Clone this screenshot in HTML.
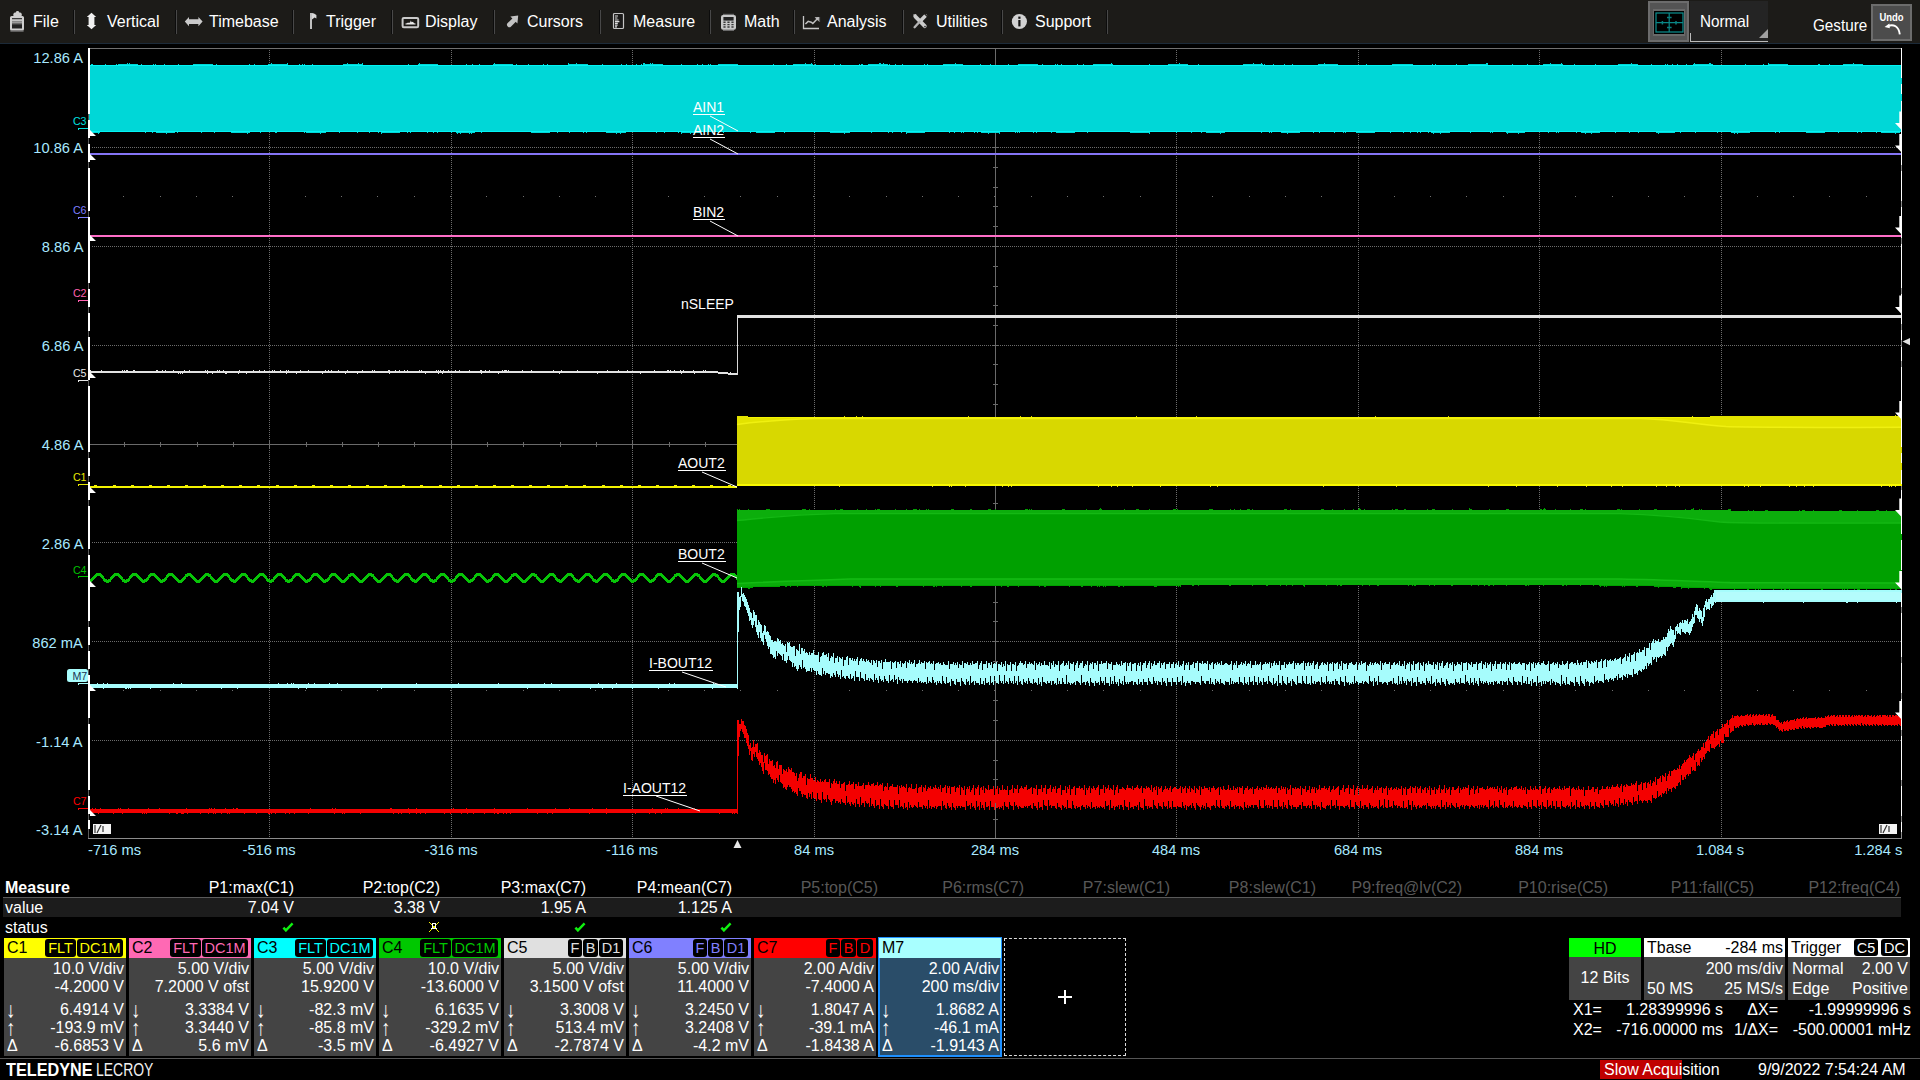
<!DOCTYPE html>
<html lang="en"><head><meta charset="utf-8"><title>Teledyne LeCroy</title>
<style>
html,body{margin:0;padding:0;background:#000;}
body{width:1920px;height:1080px;overflow:hidden;font-family:"Liberation Sans",sans-serif;color:#fff;}
#scr{position:relative;width:1920px;height:1080px;background:#000;overflow:hidden;}
.abs{position:absolute;white-space:nowrap;}
/* ---------- menu bar ---------- */
#menu{position:absolute;left:0;top:0;width:1920px;height:43px;background:#1c1b18;}
#menuline{position:absolute;left:0;top:43px;width:1920px;height:1px;background:#1c2a38;}
#menu .mi{position:absolute;top:12px;height:20px;line-height:20px;font-size:16px;color:#fff;white-space:nowrap;}
#menu .sep{position:absolute;top:10px;width:1px;height:24px;background:#484848;border-left:1px solid #0c0c0c;margin-left:-1px;}
#menu svg.ic{position:absolute;overflow:visible;}
#gridbtn{position:absolute;left:1648px;top:1px;width:41px;height:41px;background:#545454;border:2px solid #6c6c6c;box-sizing:border-box;}
#gridbtn i{position:absolute;left:2.8px;top:6px;width:32.6px;height:26.6px;background:#000;border:solid #696969;border-width:2px 1.4px;box-sizing:border-box;}
#normbox{position:absolute;left:1690px;top:1px;width:78px;height:41px;background:#242424;box-sizing:border-box;border-left:1px solid #bbb;border-bottom:1px solid #bbb;}
#normbox:before{content:"";position:absolute;left:-1px;top:0;width:1px;height:32px;background:#242424;}
#normbox span{position:absolute;left:9px;top:10px;font-size:16.5px;line-height:20px;transform:scaleX(0.925);transform-origin:0 50%;}
#normbox b{position:absolute;right:0;bottom:3px;width:0;height:0;border-left:9px solid transparent;border-bottom:9px solid #a0a0a0;}
#gesture{left:1813px;top:15px;font-size:16.5px;line-height:20px;transform:scaleX(0.925);transform-origin:0 50%;}
#undo{position:absolute;left:1871px;top:4px;width:41px;height:37px;background:#4c4c4c;border:2px solid #6c6c6c;box-sizing:border-box;}
#undo span{position:absolute;left:0;width:37px;top:5px;text-align:center;font-size:10.5px;font-weight:bold;line-height:12px;transform:scaleX(0.9);}
/* ---------- plot text ---------- */
.yl{position:absolute;right:1837px;font-size:15.33px;line-height:16px;color:#a8e8ff;white-space:nowrap;transform:scaleX(0.957);transform-origin:100% 50%;}
.xl{position:absolute;top:842px;font-size:15.33px;line-height:16px;color:#a8e8ff;white-space:nowrap;transform:scaleX(0.957);transform-origin:50% 50%;}
.ch{position:absolute;font-size:10.67px;line-height:10px;white-space:nowrap;letter-spacing:-0.2px;}
.tl{position:absolute;font-size:14px;line-height:14px;color:#fff;white-space:nowrap;border-bottom:1px solid #fff;padding:0 1px 0 0;}
.tl.nu{border-bottom:none;}
/* ---------- measure table ---------- */
#mhead{position:absolute;left:3px;top:897px;width:1898px;height:1px;background:#5a5a5a;}
#mval{position:absolute;left:3px;top:898px;width:1898px;height:19px;background:#1c1c1c;}
.mt{position:absolute;font-size:16px;line-height:18px;white-space:nowrap;color:#fff;}
.mt.r{text-align:right;width:160px;}
.mt.dim{color:#585858;}
/* ---------- channel panels ---------- */
.pn{position:absolute;top:938px;width:122px;height:118px;background:#444;}
.pn .hd{position:absolute;left:0;top:0;width:122px;height:20px;}
.pn .nm{position:absolute;left:3px;top:0;font-size:16px;line-height:20px;color:#000;}
.pn .bg{position:absolute;top:1px;height:18px;background:#000;border-radius:3px;font-size:14.5px;line-height:18px;text-align:center;}
.pn .rw{position:absolute;right:2px;font-size:16px;line-height:18px;color:#fff;white-space:nowrap;text-align:right;}
.pn .sy{position:absolute;left:3px;font-size:16px;line-height:18px;color:#fff;}
.pn .sy.ar{font-size:19px;left:2px;transform:scaleY(1.15);}
.pn.sel{background:#2a4d69;outline:2px solid #1e90ff;outline-offset:-1px;}
#addbox{position:absolute;left:1004px;top:938px;width:122px;height:118px;border:1px dashed #ddd;box-sizing:border-box;}
/* ---------- right info boxes ---------- */
.ib{position:absolute;top:938px;height:62px;background:#444;}
.ib .hd{position:absolute;left:0;top:0;right:0;height:19px;background:#fff;color:#000;}
.ib .t{position:absolute;font-size:16px;line-height:18px;white-space:nowrap;}
.cx{position:absolute;font-size:16px;line-height:18px;white-space:nowrap;color:#fff;}
/* ---------- status bar ---------- */
#sline{position:absolute;left:0;top:1058px;width:1920px;height:1px;background:#555;}
#logo,#logo2{position:absolute;top:1059px;font-size:18.5px;line-height:22px;color:#fff;white-space:nowrap;transform-origin:0 0;}
#logo{left:6px;font-weight:bold;transform:scaleX(0.877);}
#logo2{left:96px;transform:scaleX(0.754);color:#f0f0f0;}
#slow{position:absolute;left:1600px;top:1060px;width:124px;height:19px;}
#slow i{position:absolute;left:0;top:0;width:82px;height:19px;background:#c00000;}
#slow span{position:absolute;left:4px;top:0;font-size:16px;line-height:19px;color:#fff;white-space:nowrap;}
#date{left:1758px;top:1060px;font-size:16px;line-height:19px;color:#fff;}

</style></head>
<body>
<div id="scr">
<div id="menu">
<svg class="ic" style="left:9px;top:10px" width="16" height="22" viewBox="0 0 16 22"><rect x="2" y="7" width="12" height="12.6" rx="0.6" fill="#222" stroke="#cfcfcf" stroke-width="2"/><rect x="4.4" y="2.6" width="8.3" height="4.6" rx="1.6" fill="#cfcfcf"/><rect x="6.9" y="1" width="3.2" height="3" rx="1.4" fill="#cfcfcf"/><rect x="3" y="8" width="10" height="1.2" fill="#3a3a3a"/><rect x="3" y="9.2" width="10" height="2" fill="#c4c4c4"/><rect x="3" y="11.2" width="10" height="1.8" fill="#9a9a9a"/><rect x="3" y="13" width="10" height="1.4" fill="#6a6a6a"/><rect x="1.4" y="20.4" width="13.2" height="1.2" fill="#8a8a8a"/></svg>
<div class="mi" style="left:33px">File</div>
<svg class="ic" style="left:86px;top:12px" width="12" height="18" viewBox="0 0 12 18"><path d="M5.5 0.8 L10.2 5 L8.4 5 L8.4 13 L10.2 13 L5.5 17.2 L0.8 13 L2.6 13 L2.6 5 L0.8 5 Z" fill="#f0f0f0"/></svg>
<div class="mi" style="left:107px">Vertical</div>
<svg class="ic" style="left:184px;top:16px" width="20" height="12" viewBox="0 0 20 12"><path d="M0.8 5.6 L5 0.9 L5 3.2 L14.4 3.2 L14.4 0.9 L18.6 5.6 L14.4 10.3 L14.4 8 L5 8 L5 10.3 Z" fill="#cacaca"/></svg>
<div class="mi" style="left:209px">Timebase</div>
<svg class="ic" style="left:308px;top:12px" width="10" height="18" viewBox="0 0 10 18"><rect x="2" y="1" width="2" height="16" fill="#c0c0c0"/><path d="M4 1 L6 1.4 L8.4 3 L8.4 6.4 L6.6 5.6 L4 7.4 Z" fill="#d8d8d8"/></svg>
<div class="mi" style="left:326px">Trigger</div>
<svg class="ic" style="left:401px;top:16px" width="19" height="13" viewBox="0 0 19 13"><rect x="1.6" y="1.9" width="15.6" height="9.4" rx="1.2" fill="#1c1b18" stroke="#cacaca" stroke-width="2"/><path d="M4.5 8.6 L4.5 7.4 L6 7.2 L7 6.4 L8 7 L9.2 6.2 L9.8 4.4 L10.6 6.2 L12 5.8 L13 7.2 L14.5 7.4 L14.5 8.6 Z" fill="#ececec"/></svg>
<div class="mi" style="left:425px">Display</div>
<svg class="ic" style="left:506px;top:15px" width="13" height="13" viewBox="0 0 13 13"><path d="M3.4 9.8 L8.6 4.6" stroke="#c2c2c2" stroke-width="4.8" stroke-linecap="round"/><path d="M4.4 1.4 L12.2 0.6 L11.4 8.6 Z" fill="#c2c2c2"/></svg>
<div class="mi" style="left:527px">Cursors</div>
<svg class="ic" style="left:612px;top:12px" width="13" height="18" viewBox="0 0 13 18"><rect x="1.5" y="1.5" width="10" height="15" rx="1" fill="#1b1a19" stroke="#c4c4c4" stroke-width="1.2"/><path d="M3 4 H6 M3 6 H5.4 M3 8 H6.6 M3 9.6 H7.4 M3 11.4 H5.8 M3 13.2 H5.6 M3 14.8 H5" stroke="#dcdcdc" stroke-width="1.2"/></svg>
<div class="mi" style="left:633px">Measure</div>
<svg class="ic" style="left:720px;top:13px" width="17" height="19" viewBox="0 0 17 19"><rect x="3" y="0.8" width="11" height="1.4" fill="#6a6a6a"/><rect x="3" y="16.6" width="11" height="1.4" fill="#6a6a6a"/><rect x="1" y="2" width="15" height="14.8" rx="2" fill="#c8c8c8"/><rect x="3.4" y="4" width="10.2" height="3.6" fill="#222"/><path d="M3.4 9.2 H13.6 M3.4 11.6 H13.6 M3.4 14 H13.6" stroke="#3a3a3a" stroke-width="1.4" stroke-dasharray="2.2 1.8"/></svg>
<div class="mi" style="left:744px">Math</div>
<svg class="ic" style="left:802px;top:15px" width="19" height="16" viewBox="0 0 19 16"><path d="M1.5 1 V13.5 H17" fill="none" stroke="#c8c8c8" stroke-width="1.3"/><path d="M3.4 9 L6.2 6.4 L9.2 7.2 L10.8 8.4 L15.6 3.4" fill="none" stroke="#c0c0c0" stroke-width="1.5"/><path d="M12.6 2.2 L17 2 L16.8 6.4 Z" fill="#c0c0c0"/><path d="M17.6 2 V7" stroke="#777" stroke-width="0.8"/></svg>
<div class="mi" style="left:827px">Analysis</div>
<svg class="ic" style="left:912px;top:13px" width="17" height="17" viewBox="0 0 17 17"><path d="M3.4 3.6 L12.8 13.2" stroke="#cccccc" stroke-width="3.8" stroke-linecap="round"/><path d="M13.4 2.8 L8.8 7.4" stroke="#cccccc" stroke-width="3.6" stroke-linecap="round"/><path d="M7.6 8.8 L2.6 14.2" stroke="#b4b4b4" stroke-width="2.4" stroke-linecap="round"/><path d="M1.2 1.6 L4.6 1 L2 4.6 Z" fill="#cccccc"/><circle cx="13" cy="13.6" r="0.9" fill="#3a3a3a"/><path d="M12.6 0.8 L15.4 3.6" stroke="#1c1b18" stroke-width="1.2"/></svg>
<div class="mi" style="left:936px">Utilities</div>
<svg class="ic" style="left:1011px;top:13px" width="17" height="17" viewBox="0 0 17 17"><circle cx="8.4" cy="8.5" r="7.6" fill="#d2d2d2"/><rect x="7.3" y="3.6" width="2.2" height="2.2" fill="#111"/><rect x="7.3" y="7" width="2.2" height="6.4" fill="#111"/></svg>
<div class="mi" style="left:1035px">Support</div>
<div class="sep" style="left:74px"></div><div class="sep" style="left:176px"></div><div class="sep" style="left:293px"></div><div class="sep" style="left:392px"></div><div class="sep" style="left:494px"></div><div class="sep" style="left:600px"></div><div class="sep" style="left:710px"></div><div class="sep" style="left:794px"></div><div class="sep" style="left:903px"></div><div class="sep" style="left:1002px"></div><div class="sep" style="left:1107px"></div>
<div id="gridbtn"><i></i><svg style="position:absolute;left:4px;top:8px" width="31" height="23" viewBox="0 0 31 23"><rect x="2" y="2" width="27" height="19" fill="none" stroke="#0a9090" stroke-width="1.2"/><path d="M15.2 2 V21 M2 11.6 H29" stroke="#0a8888" stroke-width="1.2"/><path d="M13 6.6 H17.6 M13 16.4 H17.6 M8.4 10 V13.4 M22 10 V13.4" stroke="#0a8080" stroke-width="1.5"/></svg></div>
<div id="normbox"><span>Normal</span><b></b></div>
<div id="gesture" class="abs">Gesture</div>
<div id="undo"><span>Undo</span><svg style="position:absolute;left:10px;top:14px" width="20" height="16" viewBox="0 0 20 16"><path d="M5 6 C10.4 3.8 15.8 6.2 16.8 14.4" fill="none" stroke="#fff" stroke-width="1.9"/><path d="M1.6 7 L6.4 3.4 L6.8 8.2 Z" fill="#fff"/></svg></div>
</div>
<div id="menuline"></div>
<svg id="plot" class="abs" style="left:0;top:0" width="1920" height="1080" viewBox="0 0 1920 1080" shape-rendering="crispEdges">
<path d="M269.5 50 V838" stroke="#6c6c6c" stroke-width="1" stroke-dasharray="1 1"/>
<path d="M451.5 50 V838" stroke="#6c6c6c" stroke-width="1" stroke-dasharray="1 1"/>
<path d="M632.5 50 V838" stroke="#6c6c6c" stroke-width="1" stroke-dasharray="1 1"/>
<path d="M814.5 50 V838" stroke="#6c6c6c" stroke-width="1" stroke-dasharray="1 1"/>
<path d="M1176.5 50 V838" stroke="#6c6c6c" stroke-width="1" stroke-dasharray="1 1"/>
<path d="M1358.5 50 V838" stroke="#6c6c6c" stroke-width="1" stroke-dasharray="1 1"/>
<path d="M1539.5 50 V838" stroke="#6c6c6c" stroke-width="1" stroke-dasharray="1 1"/>
<path d="M1721.5 50 V838" stroke="#6c6c6c" stroke-width="1" stroke-dasharray="1 1"/>
<path d="M92 147.5 H1901" stroke="#6c6c6c" stroke-width="1" stroke-dasharray="1 1"/>
<path d="M92 246.5 H1901" stroke="#6c6c6c" stroke-width="1" stroke-dasharray="1 1"/>
<path d="M92 345.5 H1901" stroke="#6c6c6c" stroke-width="1" stroke-dasharray="1 1"/>
<path d="M92 542.5 H1901" stroke="#6c6c6c" stroke-width="1" stroke-dasharray="1 1"/>
<path d="M92 641.5 H1901" stroke="#6c6c6c" stroke-width="1" stroke-dasharray="1 1"/>
<path d="M92 740.5 H1901" stroke="#6c6c6c" stroke-width="1" stroke-dasharray="1 1"/>
<path d="M995.5 48 V838 M90 444.5 H1901" stroke="#6a6a6a" stroke-width="1"/>
<path d="M124.5 442 V447M160.5 442 V447M197.5 442 V447M233.5 442 V447M269.5 441 V448M306.5 442 V447M342.5 442 V447M378.5 442 V447M414.5 442 V447M451.5 441 V448M487.5 442 V447M523.5 442 V447M560.5 442 V447M596.5 442 V447M632.5 441 V448M669.5 442 V447M705.5 442 V447M741.5 442 V447M777.5 442 V447M814.5 441 V448M850.5 442 V447M886.5 442 V447M923.5 442 V447M959.5 442 V447M995.5 441 V448M1032.5 442 V447M1068.5 442 V447M1104.5 442 V447M1140.5 442 V447M1177.5 441 V448M1213.5 442 V447M1249.5 442 V447M1286.5 442 V447M1322.5 442 V447M1358.5 441 V448M1395.5 442 V447M1431.5 442 V447M1467.5 442 V447M1503.5 442 V447M1540.5 441 V448M1576.5 442 V447M1612.5 442 V447M1649.5 442 V447M1685.5 442 V447M1721.5 441 V448M1758.5 442 V447M1794.5 442 V447M1830.5 442 V447M1866.5 442 V447M993 68.5 H998M993 88.5 H998M993 108.5 H998M993 128.5 H998M992 147.5 H999M993 167.5 H998M993 187.5 H998M993 206.5 H998M993 226.5 H998M992 246.5 H999M993 266.5 H998M993 286.5 H998M993 305.5 H998M993 325.5 H998M992 345.5 H999M993 364.5 H998M993 384.5 H998M993 404.5 H998M993 424.5 H998M992 444.5 H999M993 463.5 H998M993 483.5 H998M993 503.5 H998M993 522.5 H998M992 542.5 H999M993 562.5 H998M993 582.5 H998M993 602.5 H998M993 621.5 H998M992 641.5 H999M993 661.5 H998M993 680.5 H998M993 700.5 H998M993 720.5 H998M992 740.5 H999M993 760.5 H998M993 779.5 H998M993 799.5 H998M993 819.5 H998" stroke="#6a6a6a" stroke-width="1"/>
<path d="M123 196.5h1M160 196.5h1M196 196.5h1M232 196.5h1M269 196.5h1M305 196.5h1M341 196.5h1M377 196.5h1M414 196.5h1M450 196.5h1M486 196.5h1M523 196.5h1M559 196.5h1M595 196.5h1M632 196.5h1M668 196.5h1M704 196.5h1M740 196.5h1M777 196.5h1M813 196.5h1M849 196.5h1M886 196.5h1M922 196.5h1M958 196.5h1M994 196.5h1M1031 196.5h1M1067 196.5h1M1103 196.5h1M1140 196.5h1M1176 196.5h1M1212 196.5h1M1249 196.5h1M1285 196.5h1M1321 196.5h1M1358 196.5h1M1394 196.5h1M1430 196.5h1M1466 196.5h1M1503 196.5h1M1539 196.5h1M1575 196.5h1M1612 196.5h1M1648 196.5h1M1684 196.5h1M1720 196.5h1M1757 196.5h1M1793 196.5h1M1829 196.5h1M1866 196.5h1M123 690.5h1M160 690.5h1M196 690.5h1M232 690.5h1M269 690.5h1M305 690.5h1M341 690.5h1M377 690.5h1M414 690.5h1M450 690.5h1M486 690.5h1M523 690.5h1M559 690.5h1M595 690.5h1M632 690.5h1M668 690.5h1M704 690.5h1M740 690.5h1M777 690.5h1M813 690.5h1M849 690.5h1M886 690.5h1M922 690.5h1M958 690.5h1M994 690.5h1M1031 690.5h1M1067 690.5h1M1103 690.5h1M1140 690.5h1M1176 690.5h1M1212 690.5h1M1249 690.5h1M1285 690.5h1M1321 690.5h1M1358 690.5h1M1394 690.5h1M1430 690.5h1M1466 690.5h1M1503 690.5h1M1539 690.5h1M1575 690.5h1M1612 690.5h1M1648 690.5h1M1684 690.5h1M1720 690.5h1M1757 690.5h1M1793 690.5h1M1829 690.5h1M1866 690.5h1" stroke="#707070" stroke-width="1"/>
<path d="M90 48.5 H1901" stroke="#707070" stroke-width="1"/>
<path d="M88 838.5 H1902 M1901.5 48 V838" stroke="#8c8c8c" stroke-width="1"/>
<path d="M88 65L91 65L91 64L93 64L93 65L105 65L105 64L106 64L106 65L116 65L116 64L117 64L117 65L118 65L118 64L127 64L127 63L128 63L128 64L129 64L129 63L130 63L130 64L138 64L138 65L141 65L141 64L142 64L142 65L153 65L153 64L154 64L154 65L155 65L155 64L156 64L156 65L164 65L164 64L165 64L165 65L178 65L178 64L179 64L179 65L193 65L193 64L213 64L213 65L216 65L216 64L217 64L217 65L249 65L249 64L250 64L250 65L254 65L254 64L255 64L255 65L268 65L268 64L271 64L271 63L272 63L272 64L287 64L287 63L288 63L288 65L299 65L299 64L300 64L300 65L302 65L302 64L303 64L303 65L304 65L304 64L305 64L305 65L312 65L312 64L313 64L313 65L343 65L343 64L347 64L347 63L348 63L348 64L358 64L358 63L359 63L359 64L362 64L362 63L363 63L363 65L408 65L408 64L409 64L409 65L418 65L418 64L419 64L419 63L420 63L420 64L438 64L438 65L466 65L466 64L467 64L467 65L472 65L472 64L473 64L473 65L479 65L479 64L480 64L480 65L493 65L493 64L494 64L494 63L495 63L495 64L513 64L513 65L516 65L516 64L517 64L517 65L528 65L528 64L529 64L529 65L543 65L543 64L544 64L544 65L547 65L547 64L548 64L548 65L568 65L568 63L569 63L569 64L576 64L576 63L577 63L577 64L588 64L588 65L602 65L602 64L603 64L603 65L621 65L621 64L622 64L622 65L626 65L626 64L627 64L627 65L636 65L636 64L637 64L637 65L641 65L641 64L642 64L642 65L643 65L643 63L645 63L645 64L650 64L650 63L651 63L651 64L652 64L652 63L653 63L653 64L663 64L663 65L681 65L681 64L682 64L682 65L697 65L697 64L698 64L698 65L702 65L702 64L703 64L703 65L708 65L708 64L709 64L709 65L710 65L710 64L711 64L711 65L718 65L718 64L738 64L738 65L773 65L773 64L774 64L774 65L786 65L786 64L787 64L787 65L793 65L793 64L805 64L805 63L806 63L806 64L811 64L811 63L812 63L812 64L813 64L813 65L815 65L815 64L816 64L816 65L834 65L834 64L835 64L835 65L840 65L840 64L841 64L841 65L859 65L859 64L860 64L860 65L861 65L861 64L863 64L863 65L868 65L868 64L879 64L879 63L881 63L881 64L883 64L883 63L884 63L884 64L888 64L888 65L889 65L889 64L890 64L890 65L895 65L895 64L896 64L896 65L902 65L902 64L903 64L903 65L924 65L924 64L925 64L925 65L927 65L927 64L928 64L928 65L943 65L943 64L955 64L955 63L956 63L956 64L963 64L963 65L980 65L980 64L981 64L981 65L990 65L990 64L991 64L991 65L1008 65L1008 64L1009 64L1009 65L1018 65L1018 64L1038 64L1038 65L1042 65L1042 64L1043 64L1043 65L1055 65L1055 64L1056 64L1056 65L1057 65L1057 64L1058 64L1058 65L1061 65L1061 64L1062 64L1062 65L1077 65L1077 64L1078 64L1078 65L1083 65L1083 64L1084 64L1084 65L1093 65L1093 64L1111 64L1111 63L1112 63L1112 64L1113 64L1113 65L1149 65L1149 64L1150 64L1150 65L1168 65L1168 64L1179 64L1179 63L1180 63L1180 64L1188 64L1188 65L1198 65L1198 64L1199 64L1199 65L1243 65L1243 64L1253 64L1253 63L1254 63L1254 64L1261 64L1261 63L1262 63L1262 64L1263 64L1263 65L1264 65L1264 64L1265 64L1265 65L1273 65L1273 64L1274 64L1274 65L1284 65L1284 64L1285 64L1285 65L1292 65L1292 64L1293 64L1293 65L1318 65L1318 64L1324 64L1324 63L1325 63L1325 64L1338 64L1338 65L1366 65L1366 64L1367 64L1367 65L1392 65L1392 64L1413 64L1413 65L1432 65L1432 64L1433 64L1433 65L1435 65L1435 64L1436 64L1436 65L1456 65L1456 64L1457 64L1457 65L1468 65L1468 64L1486 64L1486 63L1488 63L1488 65L1512 65L1512 64L1513 64L1513 65L1527 65L1527 64L1528 64L1528 65L1543 65L1543 64L1550 64L1550 63L1551 63L1551 64L1561 64L1561 63L1562 63L1562 64L1563 64L1563 65L1574 65L1574 64L1575 64L1575 65L1595 65L1595 64L1596 64L1596 65L1618 65L1618 64L1631 64L1631 63L1632 63L1632 64L1638 64L1638 65L1651 65L1651 64L1652 64L1652 65L1665 65L1665 64L1666 64L1666 65L1667 65L1667 64L1668 64L1668 65L1672 65L1672 64L1673 64L1673 65L1677 65L1677 64L1678 64L1678 65L1686 65L1686 64L1687 64L1687 65L1693 65L1693 64L1694 64L1694 63L1695 63L1695 64L1709 64L1709 63L1711 63L1711 64L1713 64L1713 65L1745 65L1745 64L1746 64L1746 65L1763 65L1763 64L1764 64L1764 65L1768 65L1768 63L1769 63L1769 64L1788 64L1788 65L1818 65L1818 64L1820 64L1820 65L1829 65L1829 64L1830 64L1830 65L1843 65L1843 64L1853 64L1853 63L1854 63L1854 64L1863 64L1863 65L1902 65L1902 132L1900 132L1900 133L1896 133L1896 134L1895 134L1895 133L1881 133L1881 132L1877 132L1877 133L1876 133L1876 132L1862 132L1862 133L1861 133L1861 132L1858 132L1858 133L1857 133L1857 132L1839 132L1839 133L1838 133L1838 132L1825 132L1825 133L1806 133L1806 132L1780 132L1780 133L1779 133L1779 132L1776 132L1776 133L1775 133L1775 132L1750 132L1750 133L1738 133L1738 134L1737 134L1737 133L1735 133L1735 134L1734 134L1734 133L1731 133L1731 132L1718 132L1718 133L1717 133L1717 132L1696 132L1696 133L1695 133L1695 132L1681 132L1681 133L1680 133L1680 132L1675 132L1675 133L1659 133L1659 134L1658 134L1658 133L1656 133L1656 132L1639 132L1639 133L1638 133L1638 132L1630 132L1630 133L1629 133L1629 132L1616 132L1616 133L1615 133L1615 132L1600 132L1600 133L1592 133L1592 134L1591 134L1591 133L1586 133L1586 134L1585 134L1585 133L1581 133L1581 132L1577 132L1577 133L1576 133L1576 132L1559 132L1559 133L1558 133L1558 132L1557 132L1557 133L1556 133L1556 132L1549 132L1549 133L1548 133L1548 132L1525 132L1525 133L1519 133L1519 134L1518 134L1518 133L1508 133L1508 134L1507 134L1507 133L1506 133L1506 132L1493 132L1493 133L1492 133L1492 132L1491 132L1491 133L1490 133L1490 132L1471 132L1471 133L1470 133L1470 132L1450 132L1450 133L1441 133L1441 134L1440 134L1440 133L1434 133L1434 134L1433 134L1433 133L1431 133L1431 132L1429 132L1429 133L1428 133L1428 132L1421 132L1421 133L1420 133L1420 132L1418 132L1418 133L1417 133L1417 132L1411 132L1411 133L1410 133L1410 132L1404 132L1404 133L1403 133L1403 132L1391 132L1391 133L1390 133L1390 132L1375 132L1375 133L1356 133L1356 132L1346 132L1346 133L1345 133L1345 132L1344 132L1344 133L1343 133L1343 132L1335 132L1335 133L1334 133L1334 132L1320 132L1320 133L1319 133L1319 132L1314 132L1314 133L1313 133L1313 132L1300 132L1300 133L1288 133L1288 134L1287 134L1287 133L1281 133L1281 132L1272 132L1272 133L1271 133L1271 132L1270 132L1270 133L1269 133L1269 132L1262 132L1262 133L1261 133L1261 132L1225 132L1225 133L1221 133L1221 134L1220 134L1220 133L1206 133L1206 132L1202 132L1202 133L1201 133L1201 132L1192 132L1192 133L1191 133L1191 132L1177 132L1177 133L1176 133L1176 132L1150 132L1150 134L1149 134L1149 133L1130 133L1130 132L1088 132L1088 133L1087 133L1087 132L1075 132L1075 133L1056 133L1056 132L1052 132L1052 133L1051 133L1051 132L1037 132L1037 133L1036 133L1036 132L1034 132L1034 133L1033 133L1033 132L1020 132L1020 133L1019 133L1019 132L1018 132L1018 133L1017 133L1017 132L1016 132L1016 133L1015 133L1015 132L1000 132L1000 134L999 134L999 133L989 133L989 134L988 134L988 133L981 133L981 132L978 132L978 133L977 133L977 132L975 132L975 133L974 133L974 132L964 132L964 133L963 133L963 132L962 132L962 133L961 133L961 132L955 132L955 133L954 133L954 132L950 132L950 133L949 133L949 132L925 132L925 133L907 133L907 134L906 134L906 132L902 132L902 133L901 133L901 132L893 132L893 133L892 133L892 132L889 132L889 133L888 133L888 132L872 132L872 133L871 133L871 132L850 132L850 133L845 133L845 134L844 134L844 133L830 133L830 132L815 132L815 133L814 133L814 132L785 132L785 133L784 133L784 132L775 132L775 133L756 133L756 132L751 132L751 133L750 133L750 132L724 132L724 133L723 133L723 132L700 132L700 133L691 133L691 134L690 134L690 133L682 133L682 134L681 134L681 132L679 132L679 133L678 133L678 132L665 132L665 133L664 133L664 132L657 132L657 133L656 133L656 132L626 132L626 133L621 133L621 134L620 134L620 133L617 133L617 134L616 134L616 133L606 133L606 132L587 132L587 133L586 133L586 132L584 132L584 133L583 133L583 132L570 132L570 133L569 133L569 132L558 132L558 133L557 133L557 132L550 132L550 133L531 133L531 132L482 132L482 133L481 133L481 132L475 132L475 133L472 133L472 134L471 134L471 133L470 133L470 134L469 134L469 133L461 133L461 134L460 134L460 133L458 133L458 134L457 134L457 133L456 133L456 132L452 132L452 133L451 133L451 132L438 132L438 133L437 133L437 132L434 132L434 133L433 133L433 132L428 132L428 133L427 133L427 132L411 132L411 133L410 133L410 132L408 132L408 133L407 133L407 132L400 132L400 133L382 133L382 134L381 134L381 132L379 132L379 133L378 133L378 132L370 132L370 133L369 133L369 132L358 132L358 133L357 133L357 132L340 132L340 133L339 133L339 132L326 132L326 133L321 133L321 134L320 134L320 133L306 133L306 132L305 132L305 133L304 133L304 132L277 132L277 133L275 133L275 132L261 132L261 133L260 133L260 132L250 132L250 133L248 133L248 134L247 134L247 133L231 133L231 132L215 132L215 133L214 133L214 132L202 132L202 133L201 133L201 132L178 132L178 133L177 133L177 132L175 132L175 133L167 133L167 134L166 134L166 133L156 133L156 132L153 132L153 133L152 133L152 132L146 132L146 133L145 133L145 132L100 132L100 133L99 133L99 134L98 134L98 133L88 133Z" fill="#00d7d7"/>
<rect x="88" y="65" width="1814" height="1" fill="#00f4f4"/>
<rect x="88" y="131" width="1814" height="1" fill="#00f4f4"/>
<rect x="90" y="153" width="1811" height="2" fill="#8474f4"/>
<rect x="90" y="235" width="1811" height="2" fill="#ff6ec8"/>
<path d="M90 370L91 370L91 371L101 371L101 370L102 370L102 371L122 371L122 370L123 370L123 371L124 371L124 370L125 370L125 371L126 371L126 370L128 370L128 371L133 371L133 370L135 370L135 371L156 371L156 370L158 370L158 371L162 371L162 370L163 370L163 371L165 371L165 370L166 370L166 371L173 371L173 370L174 370L174 371L184 371L184 370L185 370L185 371L189 371L189 370L190 370L190 371L205 371L205 370L206 370L206 371L207 371L207 370L208 370L208 371L217 371L217 370L218 370L218 371L219 371L219 370L220 370L220 371L223 371L223 370L224 370L224 371L239 371L239 370L240 370L240 371L253 371L253 370L254 370L254 371L259 371L259 370L260 370L260 371L264 371L264 370L265 370L265 371L272 371L272 370L273 370L273 371L274 371L274 370L275 370L275 371L280 371L280 370L281 370L281 371L286 371L286 370L287 370L287 371L288 371L288 370L289 370L289 371L300 371L300 370L301 370L301 371L308 371L308 370L309 370L309 371L325 371L325 370L326 370L326 371L328 371L328 370L329 370L329 371L331 371L331 370L332 370L332 371L338 371L338 370L339 370L339 371L347 371L347 370L348 370L348 371L362 371L362 370L363 370L363 371L372 371L372 370L373 370L373 371L374 371L374 370L375 370L375 371L388 371L388 370L390 370L390 371L395 371L395 370L396 370L396 371L399 371L399 370L400 370L400 371L404 371L404 370L405 370L405 371L407 371L407 370L408 370L408 371L419 371L419 370L420 370L420 371L421 371L421 370L422 370L422 371L436 371L436 370L437 370L437 371L438 371L438 370L439 370L439 371L440 371L440 370L441 370L441 371L443 371L443 370L444 370L444 371L448 371L448 370L449 370L449 371L455 371L455 370L456 370L456 371L459 371L459 370L460 370L460 371L469 371L469 370L470 370L470 371L480 371L480 370L482 370L482 371L485 371L485 370L486 370L486 371L489 371L489 370L490 370L490 371L502 371L502 370L503 370L503 371L504 371L504 370L507 370L507 371L508 371L508 370L509 370L509 371L522 371L522 370L523 370L523 371L531 371L531 370L532 370L532 371L553 371L553 370L554 370L554 371L561 371L561 370L562 370L562 371L577 371L577 370L578 370L578 371L607 371L607 370L608 370L608 371L618 371L618 370L619 370L619 371L627 371L627 370L628 370L628 371L654 371L654 370L655 370L655 371L667 371L667 370L669 370L669 371L670 371L670 370L671 370L671 371L674 371L674 370L675 370L675 371L680 371L680 370L681 370L681 371L683 371L683 370L684 370L684 371L693 371L693 370L694 370L694 371L703 371L703 370L704 370L704 371L705 371L705 370L706 370L706 371L718 371L718 372L728 372L728 373L730 373L730 372L731 372L731 373L737 373L737 375L728 375L728 374L718 374L718 373L695 373L695 374L694 374L694 373L682 373L682 374L681 374L681 373L641 373L641 374L640 374L640 373L598 373L598 374L597 374L597 373L560 373L560 374L559 374L559 373L499 373L499 374L498 374L498 373L482 373L482 374L481 374L481 373L443 373L443 374L442 374L442 373L439 373L439 374L438 374L438 373L426 373L426 374L425 374L425 373L390 373L390 374L389 374L389 373L358 373L358 374L357 374L357 373L346 373L346 374L345 374L345 373L323 373L323 374L322 374L322 373L297 373L297 374L296 374L296 373L287 373L287 374L286 374L286 373L247 373L247 374L246 374L246 373L239 373L239 374L238 374L238 373L227 373L227 374L225 374L225 373L213 373L213 374L212 374L212 373L208 373L208 374L207 374L207 373L183 373L183 374L182 374L182 373L181 373L181 374L180 374L180 373L179 373L179 374L178 374L178 373L90 373Z" fill="#e2e2e2"/>
<rect x="737" y="315" width="1" height="60" fill="#d8d8d8"/>
<rect x="737" y="315" width="1164" height="3" fill="#e2e2e2"/>
<path d="M90 486L94 486L94 485L97 485L97 486L113 486L113 485L116 485L116 486L131 486L131 485L134 485L134 486L149 486L149 485L152 485L152 486L167 486L167 485L170 485L170 486L185 486L185 485L188 485L188 486L203 486L203 485L206 485L206 486L221 486L221 485L224 485L224 486L239 486L239 485L242 485L242 486L257 486L257 485L260 485L260 486L276 486L276 485L279 485L279 486L294 486L294 485L297 485L297 486L312 486L312 485L315 485L315 486L330 486L330 485L333 485L333 486L348 486L348 485L351 485L351 486L366 486L366 485L369 485L369 486L384 486L384 485L387 485L387 486L402 486L402 485L405 485L405 486L420 486L420 485L423 485L423 486L439 486L439 485L442 485L442 486L457 486L457 485L460 485L460 486L475 486L475 485L478 485L478 486L493 486L493 485L496 485L496 486L511 486L511 485L514 485L514 486L529 486L529 485L532 485L532 486L547 486L547 485L550 485L550 486L565 486L565 485L568 485L568 486L583 486L583 485L586 485L586 486L602 486L602 485L605 485L605 486L620 486L620 485L623 485L623 486L638 486L638 485L641 485L641 486L656 486L656 485L659 485L659 486L674 486L674 485L677 485L677 486L692 486L692 485L695 485L695 486L710 486L710 485L713 485L713 486L728 486L728 485L731 485L731 486L737 486L737 488L90 488Z" fill="#f2f200"/>
<path d="M737 416L748 416L748 417L844 417L844 416L845 416L845 417L856 417L856 416L857 416L857 417L862 417L862 416L863 416L863 417L968 417L968 416L969 416L969 417L1020 417L1020 416L1021 416L1021 417L1031 417L1031 416L1032 416L1032 417L1136 417L1136 416L1137 416L1137 417L1196 417L1196 416L1197 416L1197 417L1375 417L1375 416L1376 416L1376 417L1448 417L1448 416L1449 416L1449 417L1692 417L1692 416L1693 416L1693 417L1710 417L1710 416L1895 416L1895 415L1896 415L1896 416L1902 416L1902 486L1896 486L1896 487L1895 487L1895 486L1892 486L1892 487L1891 487L1891 486L1890 486L1890 487L1889 487L1889 486L1882 486L1882 487L1881 487L1881 486L1814 486L1814 487L1813 487L1813 486L1805 486L1805 487L1804 487L1804 486L1797 486L1797 487L1796 487L1796 486L1790 486L1790 487L1789 487L1789 486L1761 486L1761 487L1760 487L1760 486L1749 486L1749 487L1748 487L1748 486L1745 486L1745 487L1744 487L1744 486L1680 486L1680 487L1679 487L1679 486L1676 486L1676 487L1675 487L1675 486L1667 486L1667 487L1666 487L1666 486L1657 486L1657 487L1656 487L1656 486L1623 486L1623 487L1622 487L1622 486L1612 486L1612 487L1611 487L1611 486L1587 486L1587 487L1586 487L1586 486L1558 486L1558 487L1557 487L1557 486L1517 486L1517 487L1516 487L1516 486L1489 486L1489 487L1488 487L1488 486L1397 486L1397 487L1396 487L1396 486L1324 486L1324 487L1323 487L1323 486L1218 486L1218 487L1217 487L1217 486L1211 486L1211 487L1210 487L1210 486L1161 486L1161 487L1160 487L1160 486L1133 486L1133 487L1132 487L1132 486L1118 486L1118 487L1117 487L1117 486L1112 486L1112 487L1111 487L1111 486L1099 486L1099 487L1098 487L1098 486L1012 486L1012 487L1011 487L1011 486L1009 486L1009 487L1008 487L1008 486L1003 486L1003 487L1002 487L1002 486L966 486L966 487L965 487L965 486L952 486L952 487L951 487L951 486L950 486L950 487L949 487L949 486L933 486L933 487L932 487L932 486L840 486L840 487L839 487L839 486L737 486Z" fill="#d8d800"/>
<path d="M737 416 L737 424.5 C752 422.5 775 420 815 418.6 L1640 418.6 C1672 419.4 1694 424 1726 426.6 C1750 427.6 1800 427.6 1902 427.2 L1902 416 L1710 416 L1710 417 L748 417 L748 416 Z" fill="#e3e300" shape-rendering="auto"/>
<path d="M737 424.5 C752 422.5 775 420 815 418.6 L1640 418.6 C1672 419.4 1694 424 1726 426.6 C1750 427.6 1800 427.6 1902 427.2" fill="none" stroke="#f0f010" stroke-width="1.5" shape-rendering="auto"/>
<rect x="748" y="417" width="962" height="1" fill="#f4f400"/>
<rect x="737" y="484" width="1165" height="2" fill="#f8f800"/>
<path d="M90 579L91 579L91 578L92 578L92 577L93 577L93 576L94 576L94 575L95 575L95 574L96 574L96 573L101 573L101 574L102 574L102 575L103 575L103 576L104 576L104 578L105 578L105 579L107 579L107 580L108 580L108 579L110 579L110 577L111 577L111 576L112 576L112 575L113 575L113 574L114 574L114 573L119 573L119 574L120 574L120 575L121 575L121 576L122 576L122 577L123 577L123 579L125 579L125 580L126 580L126 579L128 579L128 578L129 578L129 576L130 576L130 575L131 575L131 574L132 574L132 573L137 573L137 574L138 574L138 575L139 575L139 576L140 576L140 577L141 577L141 578L142 578L142 579L143 579L143 580L144 580L144 579L146 579L146 578L147 578L147 577L148 577L148 575L149 575L149 574L150 574L150 573L155 573L155 574L156 574L156 575L157 575L157 576L158 576L158 577L159 577L159 578L160 578L160 579L161 579L161 580L162 580L162 579L164 579L164 578L165 578L165 577L166 577L166 575L167 575L167 574L168 574L168 573L173 573L173 574L174 574L174 575L175 575L175 576L176 576L176 577L177 577L177 578L178 578L178 579L179 579L179 580L181 580L181 579L182 579L182 578L183 578L183 577L184 577L184 576L185 576L185 574L187 574L187 573L191 573L191 574L192 574L192 575L193 575L193 576L194 576L194 577L195 577L195 578L196 578L196 579L197 579L197 580L199 580L199 579L200 579L200 578L201 578L201 577L202 577L202 576L203 576L203 575L204 575L204 574L205 574L205 573L209 573L209 574L211 574L211 576L212 576L212 577L213 577L213 578L214 578L214 579L215 579L215 580L217 580L217 579L218 579L218 578L219 578L219 577L220 577L220 576L221 576L221 575L222 575L222 574L223 574L223 573L228 573L228 574L229 574L229 575L230 575L230 577L231 577L231 578L232 578L232 579L234 579L234 580L235 580L235 579L236 579L236 578L237 578L237 577L238 577L238 576L239 576L239 575L240 575L240 574L241 574L241 573L246 573L246 574L247 574L247 575L248 575L248 577L249 577L249 578L250 578L250 579L252 579L252 580L253 580L253 579L254 579L254 578L255 578L255 577L256 577L256 576L257 576L257 575L258 575L258 574L259 574L259 573L264 573L264 574L265 574L265 575L266 575L266 576L267 576L267 578L268 578L268 579L270 579L270 580L271 580L271 579L273 579L273 577L274 577L274 576L275 576L275 575L276 575L276 574L277 574L277 573L282 573L282 574L283 574L283 575L284 575L284 576L285 576L285 577L286 577L286 579L288 579L288 580L289 580L289 579L291 579L291 578L292 578L292 576L293 576L293 575L294 575L294 574L295 574L295 573L300 573L300 574L301 574L301 575L302 575L302 576L303 576L303 577L304 577L304 578L305 578L305 579L306 579L306 580L307 580L307 579L309 579L309 578L310 578L310 577L311 577L311 575L312 575L312 574L313 574L313 573L318 573L318 574L319 574L319 575L320 575L320 576L321 576L321 577L322 577L322 578L323 578L323 579L324 579L324 580L325 580L325 579L327 579L327 578L328 578L328 577L329 577L329 575L330 575L330 574L331 574L331 573L336 573L336 574L337 574L337 575L338 575L338 576L339 576L339 577L340 577L340 578L341 578L341 579L342 579L342 580L344 580L344 579L345 579L345 578L346 578L346 577L347 577L347 576L348 576L348 574L350 574L350 573L354 573L354 574L355 574L355 575L356 575L356 576L357 576L357 577L358 577L358 578L359 578L359 579L360 579L360 580L362 580L362 579L363 579L363 578L364 578L364 577L365 577L365 576L366 576L366 575L367 575L367 574L368 574L368 573L372 573L372 574L374 574L374 576L375 576L375 577L376 577L376 578L377 578L377 579L378 579L378 580L380 580L380 579L381 579L381 578L382 578L382 577L383 577L383 576L384 576L384 575L385 575L385 574L386 574L386 573L391 573L391 574L392 574L392 575L393 575L393 577L394 577L394 578L395 578L395 579L397 579L397 580L398 580L398 579L399 579L399 578L400 578L400 577L401 577L401 576L402 576L402 575L403 575L403 574L404 574L404 573L409 573L409 574L410 574L410 575L411 575L411 577L412 577L412 578L413 578L413 579L415 579L415 580L416 580L416 579L417 579L417 578L418 578L418 577L419 577L419 576L420 576L420 575L421 575L421 574L422 574L422 573L427 573L427 574L428 574L428 575L429 575L429 576L430 576L430 578L431 578L431 579L433 579L433 580L434 580L434 579L436 579L436 577L437 577L437 576L438 576L438 575L439 575L439 574L440 574L440 573L445 573L445 574L446 574L446 575L447 575L447 576L448 576L448 577L449 577L449 579L451 579L451 580L452 580L452 579L454 579L454 578L455 578L455 576L456 576L456 575L457 575L457 574L458 574L458 573L463 573L463 574L464 574L464 575L465 575L465 576L466 576L466 577L467 577L467 578L468 578L468 579L469 579L469 580L470 580L470 579L472 579L472 578L473 578L473 577L474 577L474 575L475 575L475 574L476 574L476 573L481 573L481 574L482 574L482 575L483 575L483 576L484 576L484 577L485 577L485 578L486 578L486 579L487 579L487 580L488 580L488 579L490 579L490 578L491 578L491 577L492 577L492 575L493 575L493 574L494 574L494 573L499 573L499 574L500 574L500 575L501 575L501 576L502 576L502 577L503 577L503 578L504 578L504 579L505 579L505 580L507 580L507 579L508 579L508 578L509 578L509 577L510 577L510 576L511 576L511 574L513 574L513 573L517 573L517 574L518 574L518 575L519 575L519 576L520 576L520 577L521 577L521 578L522 578L522 579L523 579L523 580L525 580L525 579L526 579L526 578L527 578L527 577L528 577L528 576L529 576L529 575L530 575L530 574L531 574L531 573L535 573L535 574L537 574L537 576L538 576L538 577L539 577L539 578L540 578L540 579L541 579L541 580L543 580L543 579L544 579L544 578L545 578L545 577L546 577L546 576L547 576L547 575L548 575L548 574L549 574L549 573L554 573L554 574L555 574L555 575L556 575L556 577L557 577L557 578L558 578L558 579L560 579L560 580L561 580L561 579L562 579L562 578L563 578L563 577L564 577L564 576L565 576L565 575L566 575L566 574L567 574L567 573L572 573L572 574L573 574L573 575L574 575L574 577L575 577L575 578L576 578L576 579L578 579L578 580L579 580L579 579L580 579L580 578L581 578L581 577L582 577L582 576L583 576L583 575L584 575L584 574L585 574L585 573L590 573L590 574L591 574L591 575L592 575L592 576L593 576L593 578L594 578L594 579L596 579L596 580L597 580L597 579L598 579L598 578L599 578L599 577L600 577L600 576L601 576L601 575L602 575L602 574L603 574L603 573L608 573L608 574L609 574L609 575L610 575L610 576L611 576L611 577L612 577L612 579L614 579L614 580L615 580L615 579L617 579L617 578L618 578L618 576L619 576L619 575L620 575L620 574L621 574L621 573L626 573L626 574L627 574L627 575L628 575L628 576L629 576L629 577L630 577L630 578L631 578L631 579L632 579L632 580L633 580L633 579L635 579L635 578L636 578L636 577L637 577L637 575L638 575L638 574L639 574L639 573L644 573L644 574L645 574L645 575L646 575L646 576L647 576L647 577L648 577L648 578L649 578L649 579L650 579L650 580L651 580L651 579L653 579L653 578L654 578L654 577L655 577L655 575L656 575L656 574L657 574L657 573L662 573L662 574L663 574L663 575L664 575L664 576L665 576L665 577L666 577L666 578L667 578L667 579L668 579L668 580L670 580L670 579L671 579L671 578L672 578L672 577L673 577L673 576L674 576L674 574L676 574L676 573L680 573L680 574L681 574L681 575L682 575L682 576L683 576L683 577L684 577L684 578L685 578L685 579L686 579L686 580L688 580L688 579L689 579L689 578L690 578L690 577L691 577L691 576L692 576L692 575L693 575L693 574L694 574L694 573L698 573L698 574L700 574L700 576L701 576L701 577L702 577L702 578L703 578L703 579L704 579L704 580L706 580L706 579L707 579L707 578L708 578L708 577L709 577L709 576L710 576L710 575L711 575L711 574L712 574L712 573L716 573L716 574L718 574L718 575L719 575L719 577L720 577L720 578L721 578L721 579L722 579L722 580L724 580L724 579L725 579L725 578L726 578L726 577L727 577L727 576L728 576L728 575L729 575L729 574L730 574L730 573L735 573L735 574L736 574L736 575L737 575L737 580L736 580L736 578L735 578L735 577L734 577L734 576L731 576L731 577L730 577L730 578L729 578L729 579L728 579L728 580L727 580L727 581L726 581L726 582L725 582L725 583L721 583L721 582L720 582L720 581L719 581L719 580L718 580L718 578L717 578L717 577L715 577L715 576L713 576L713 577L712 577L712 578L711 578L711 579L710 579L710 580L709 580L709 581L708 581L708 582L707 582L707 583L703 583L703 582L702 582L702 581L701 581L701 580L700 580L700 579L699 579L699 577L697 577L697 576L695 576L695 577L694 577L694 578L693 578L693 579L692 579L692 580L691 580L691 581L690 581L690 582L689 582L689 583L685 583L685 582L684 582L684 581L683 581L683 580L682 580L682 579L681 579L681 578L680 578L680 577L679 577L679 576L677 576L677 577L675 577L675 579L674 579L674 580L673 580L673 581L672 581L672 582L671 582L671 583L667 583L667 582L666 582L666 581L665 581L665 580L664 580L664 579L663 579L663 578L662 578L662 577L661 577L661 576L658 576L658 577L657 577L657 578L656 578L656 580L655 580L655 581L654 581L654 582L652 582L652 583L649 583L649 582L648 582L648 581L647 581L647 580L646 580L646 579L645 579L645 578L644 578L644 577L643 577L643 576L640 576L640 577L639 577L639 578L638 578L638 580L637 580L637 581L636 581L636 582L634 582L634 583L631 583L631 582L630 582L630 581L629 581L629 580L628 580L628 579L627 579L627 578L626 578L626 577L625 577L625 576L622 576L622 577L621 577L621 578L620 578L620 579L619 579L619 581L618 581L618 582L616 582L616 583L613 583L613 582L611 582L611 580L610 580L610 579L609 579L609 578L608 578L608 577L607 577L607 576L604 576L604 577L603 577L603 578L602 578L602 579L601 579L601 580L600 580L600 581L599 581L599 582L598 582L598 583L595 583L595 582L593 582L593 581L592 581L592 579L591 579L591 578L590 578L590 577L589 577L589 576L586 576L586 577L585 577L585 578L584 578L584 579L583 579L583 580L582 580L582 581L581 581L581 582L580 582L580 583L577 583L577 582L575 582L575 581L574 581L574 580L573 580L573 578L572 578L572 577L571 577L571 576L568 576L568 577L567 577L567 578L566 578L566 579L565 579L565 580L564 580L564 581L563 581L563 582L562 582L562 583L559 583L559 582L557 582L557 581L556 581L556 580L555 580L555 578L554 578L554 577L553 577L553 576L550 576L550 577L549 577L549 578L548 578L548 579L547 579L547 580L546 580L546 581L545 581L545 582L544 582L544 583L540 583L540 582L539 582L539 581L538 581L538 580L537 580L537 579L536 579L536 577L534 577L534 576L532 576L532 577L531 577L531 578L530 578L530 579L529 579L529 580L528 580L528 581L527 581L527 582L526 582L526 583L522 583L522 582L521 582L521 581L520 581L520 580L519 580L519 579L518 579L518 578L517 578L517 577L516 577L516 576L514 576L514 577L512 577L512 579L511 579L511 580L510 580L510 581L509 581L509 582L508 582L508 583L504 583L504 582L503 582L503 581L502 581L502 580L501 580L501 579L500 579L500 578L499 578L499 577L498 577L498 576L495 576L495 577L494 577L494 578L493 578L493 580L492 580L492 581L491 581L491 582L489 582L489 583L486 583L486 582L485 582L485 581L484 581L484 580L483 580L483 579L482 579L482 578L481 578L481 577L480 577L480 576L477 576L477 577L476 577L476 578L475 578L475 580L474 580L474 581L473 581L473 582L471 582L471 583L468 583L468 582L467 582L467 581L466 581L466 580L465 580L465 579L464 579L464 578L463 578L463 577L462 577L462 576L459 576L459 577L458 577L458 578L457 578L457 579L456 579L456 581L455 581L455 582L453 582L453 583L450 583L450 582L448 582L448 580L447 580L447 579L446 579L446 578L445 578L445 577L444 577L444 576L441 576L441 577L440 577L440 578L439 578L439 579L438 579L438 580L437 580L437 582L435 582L435 583L432 583L432 582L430 582L430 581L429 581L429 579L428 579L428 578L427 578L427 577L426 577L426 576L423 576L423 577L422 577L422 578L421 578L421 579L420 579L420 580L419 580L419 581L418 581L418 582L417 582L417 583L414 583L414 582L412 582L412 581L411 581L411 580L410 580L410 578L409 578L409 577L408 577L408 576L405 576L405 577L404 577L404 578L403 578L403 579L402 579L402 580L401 580L401 581L400 581L400 582L399 582L399 583L396 583L396 582L394 582L394 581L393 581L393 580L392 580L392 578L391 578L391 577L390 577L390 576L387 576L387 577L386 577L386 578L385 578L385 579L384 579L384 580L383 580L383 581L382 581L382 582L381 582L381 583L377 583L377 582L376 582L376 581L375 581L375 580L374 580L374 579L373 579L373 577L371 577L371 576L369 576L369 577L368 577L368 578L367 578L367 579L366 579L366 580L365 580L365 581L364 581L364 582L363 582L363 583L359 583L359 582L358 582L358 581L357 581L357 580L356 580L356 579L355 579L355 578L354 578L354 577L353 577L353 576L351 576L351 577L349 577L349 579L348 579L348 580L347 580L347 581L346 581L346 582L345 582L345 583L341 583L341 582L340 582L340 581L339 581L339 580L338 580L338 579L337 579L337 578L336 578L336 577L335 577L335 576L332 576L332 577L331 577L331 578L330 578L330 580L329 580L329 581L328 581L328 582L326 582L326 583L323 583L323 582L322 582L322 581L321 581L321 580L320 580L320 579L319 579L319 578L318 578L318 577L317 577L317 576L314 576L314 577L313 577L313 578L312 578L312 580L311 580L311 581L310 581L310 582L308 582L308 583L305 583L305 582L304 582L304 581L303 581L303 580L302 580L302 579L301 579L301 578L300 578L300 577L299 577L299 576L296 576L296 577L295 577L295 578L294 578L294 579L293 579L293 581L292 581L292 582L290 582L290 583L287 583L287 582L285 582L285 580L284 580L284 579L283 579L283 578L282 578L282 577L281 577L281 576L278 576L278 577L277 577L277 578L276 578L276 579L275 579L275 580L274 580L274 582L272 582L272 583L269 583L269 582L267 582L267 581L266 581L266 579L265 579L265 578L264 578L264 577L263 577L263 576L260 576L260 577L259 577L259 578L258 578L258 579L257 579L257 580L256 580L256 581L255 581L255 582L254 582L254 583L251 583L251 582L249 582L249 581L248 581L248 580L247 580L247 578L246 578L246 577L245 577L245 576L242 576L242 577L241 577L241 578L240 578L240 579L239 579L239 580L238 580L238 581L237 581L237 582L236 582L236 583L233 583L233 582L231 582L231 581L230 581L230 580L229 580L229 578L228 578L228 577L227 577L227 576L224 576L224 577L223 577L223 578L222 578L222 579L221 579L221 580L220 580L220 581L219 581L219 582L218 582L218 583L214 583L214 582L213 582L213 581L212 581L212 580L211 580L211 579L210 579L210 577L208 577L208 576L206 576L206 577L205 577L205 578L204 578L204 579L203 579L203 580L202 580L202 581L201 581L201 582L200 582L200 583L196 583L196 582L195 582L195 581L194 581L194 580L193 580L193 579L192 579L192 578L191 578L191 577L190 577L190 576L188 576L188 577L186 577L186 579L185 579L185 580L184 580L184 581L183 581L183 582L182 582L182 583L178 583L178 582L177 582L177 581L176 581L176 580L175 580L175 579L174 579L174 578L173 578L173 577L172 577L172 576L169 576L169 577L168 577L168 578L167 578L167 580L166 580L166 581L165 581L165 582L163 582L163 583L160 583L160 582L159 582L159 581L158 581L158 580L157 580L157 579L156 579L156 578L155 578L155 577L154 577L154 576L151 576L151 577L150 577L150 578L149 578L149 580L148 580L148 581L147 581L147 582L145 582L145 583L142 583L142 582L141 582L141 581L140 581L140 580L139 580L139 579L138 579L138 578L137 578L137 577L136 577L136 576L133 576L133 577L132 577L132 578L131 578L131 579L130 579L130 581L129 581L129 582L127 582L127 583L124 583L124 582L122 582L122 580L121 580L121 579L120 579L120 578L119 578L119 577L118 577L118 576L115 576L115 577L114 577L114 578L113 578L113 579L112 579L112 580L111 580L111 582L109 582L109 583L106 583L106 582L104 582L104 581L103 581L103 579L102 579L102 578L101 578L101 577L100 577L100 576L97 576L97 577L96 577L96 578L95 578L95 579L94 579L94 580L93 580L93 581L92 581L92 582L91 582L91 583L90 583Z" fill="#08c408"/>
<path d="M737 509L738 509L738 510L739 510L739 509L740 509L740 510L748 510L748 509L749 509L749 510L766 510L766 509L770 509L770 510L802 510L802 509L806 509L806 510L809 510L809 509L810 509L810 510L835 510L835 509L836 509L836 510L840 510L840 509L843 509L843 510L857 510L857 509L858 509L858 510L866 510L866 509L867 509L867 510L875 510L875 509L876 509L876 510L877 510L877 509L880 509L880 510L895 510L895 509L896 509L896 510L906 510L906 509L907 509L907 510L913 510L913 509L917 509L917 510L919 510L919 509L920 509L920 510L926 510L926 509L927 509L927 510L928 510L928 509L929 509L929 510L951 510L951 509L954 509L954 510L970 510L970 509L972 509L972 510L988 510L988 509L991 509L991 510L995 510L995 509L996 509L996 510L1025 510L1025 509L1028 509L1028 510L1029 510L1029 509L1030 509L1030 510L1031 510L1031 509L1032 509L1032 510L1062 510L1062 509L1065 509L1065 510L1086 510L1086 509L1087 509L1087 510L1099 510L1099 509L1100 509L1100 508L1101 508L1101 509L1102 509L1102 510L1124 510L1124 509L1125 509L1125 510L1136 510L1136 509L1139 509L1139 510L1149 510L1149 509L1150 509L1150 510L1173 510L1173 509L1176 509L1176 510L1177 510L1177 509L1178 509L1178 510L1209 510L1209 509L1213 509L1213 510L1230 510L1230 509L1231 509L1231 510L1234 510L1234 509L1235 509L1235 510L1240 510L1240 509L1241 509L1241 510L1247 510L1247 509L1250 509L1250 510L1252 510L1252 509L1253 509L1253 510L1284 510L1284 509L1287 509L1287 510L1290 510L1290 509L1291 509L1291 510L1321 510L1321 509L1324 509L1324 510L1332 510L1332 509L1333 509L1333 510L1344 510L1344 509L1345 509L1345 510L1353 510L1353 509L1354 509L1354 510L1358 510L1358 509L1359 509L1359 508L1360 508L1360 509L1361 509L1361 510L1364 510L1364 509L1365 509L1365 510L1392 510L1392 509L1393 509L1393 510L1395 510L1395 509L1398 509L1398 510L1404 510L1404 509L1406 509L1406 510L1427 510L1427 509L1428 509L1428 510L1432 510L1432 509L1435 509L1435 510L1452 510L1452 509L1453 509L1453 510L1469 510L1469 508L1470 508L1470 509L1472 509L1472 510L1489 510L1489 509L1490 509L1490 510L1506 510L1506 509L1509 509L1509 510L1540 510L1540 509L1542 509L1542 510L1543 510L1543 509L1544 509L1544 508L1545 508L1545 509L1546 509L1546 510L1555 510L1555 509L1556 509L1556 510L1570 510L1570 509L1571 509L1571 510L1580 510L1580 509L1583 509L1583 510L1585 510L1585 509L1586 509L1586 510L1617 510L1617 509L1620 509L1620 510L1621 510L1621 509L1622 509L1622 510L1639 510L1639 509L1640 509L1640 510L1654 510L1654 509L1657 509L1657 510L1685 510L1685 509L1686 509L1686 510L1691 510L1691 509L1693 509L1693 508L1694 508L1694 510L1699 510L1699 509L1700 509L1700 510L1701 510L1701 509L1702 509L1702 510L1728 510L1728 509L1731 509L1731 511L1748 511L1748 510L1749 510L1749 511L1753 511L1753 510L1754 510L1754 511L1765 511L1765 510L1768 510L1768 511L1799 511L1799 510L1800 510L1800 511L1802 511L1802 510L1805 510L1805 511L1813 511L1813 510L1814 510L1814 511L1839 511L1839 510L1842 510L1842 511L1857 511L1857 510L1858 510L1858 511L1876 511L1876 510L1879 510L1879 511L1886 511L1886 510L1887 510L1887 511L1902 511L1902 589L1897 589L1897 590L1895 590L1895 589L1891 589L1891 590L1890 590L1890 589L1867 589L1867 590L1866 590L1866 589L1860 589L1860 590L1857 590L1857 589L1855 589L1855 590L1854 590L1854 589L1848 589L1848 590L1847 590L1847 589L1845 589L1845 590L1844 590L1844 589L1843 589L1843 590L1842 590L1842 589L1823 589L1823 590L1822 590L1822 591L1821 591L1821 589L1790 589L1790 590L1789 590L1789 589L1786 589L1786 590L1784 590L1784 589L1782 589L1782 590L1781 590L1781 589L1774 589L1774 590L1773 590L1773 589L1761 589L1761 590L1760 590L1760 589L1759 589L1759 590L1758 590L1758 589L1756 589L1756 590L1755 590L1755 589L1749 589L1749 590L1747 590L1747 589L1735 589L1735 590L1734 590L1734 589L1712 589L1712 590L1710 590L1710 589L1709 589L1709 588L1705 588L1705 589L1704 589L1704 588L1689 588L1689 589L1688 589L1688 588L1682 588L1682 589L1681 589L1681 587L1676 587L1676 588L1673 588L1673 587L1659 587L1659 588L1658 588L1658 587L1654 587L1654 586L1638 586L1638 587L1636 587L1636 586L1625 586L1625 587L1624 587L1624 586L1623 586L1623 587L1622 587L1622 586L1607 586L1607 587L1606 587L1606 586L1605 586L1605 587L1604 587L1604 586L1601 586L1601 587L1600 587L1600 586L1599 586L1599 585L1594 585L1594 586L1593 586L1593 585L1581 585L1581 586L1580 586L1580 585L1567 585L1567 586L1566 586L1566 585L1564 585L1564 586L1562 586L1562 585L1544 585L1544 586L1543 586L1543 585L1529 585L1529 586L1528 586L1528 585L1527 585L1527 586L1525 586L1525 585L1507 585L1507 586L1506 586L1506 585L1494 585L1494 586L1493 586L1493 585L1490 585L1490 586L1488 586L1488 585L1485 585L1485 586L1484 586L1484 585L1479 585L1479 586L1478 586L1478 585L1472 585L1472 586L1471 586L1471 585L1453 585L1453 586L1451 586L1451 585L1435 585L1435 586L1434 586L1434 585L1430 585L1430 586L1429 586L1429 585L1416 585L1416 586L1414 586L1414 585L1413 585L1413 586L1412 586L1412 585L1409 585L1409 586L1408 586L1408 585L1379 585L1379 586L1377 586L1377 585L1370 585L1370 586L1369 586L1369 585L1363 585L1363 586L1362 586L1362 585L1342 585L1342 586L1340 586L1340 585L1338 585L1338 586L1337 586L1337 585L1327 585L1327 586L1326 586L1326 585L1305 585L1305 587L1304 587L1304 586L1303 586L1303 585L1293 585L1293 586L1292 586L1292 585L1287 585L1287 586L1286 586L1286 585L1281 585L1281 586L1280 586L1280 585L1268 585L1268 586L1266 586L1266 585L1253 585L1253 586L1252 586L1252 585L1231 585L1231 586L1229 586L1229 585L1199 585L1199 586L1198 586L1198 585L1194 585L1194 586L1192 586L1192 585L1181 585L1181 587L1180 587L1180 586L1179 586L1179 587L1178 587L1178 586L1157 586L1157 587L1154 587L1154 586L1124 586L1124 587L1123 587L1123 586L1120 586L1120 587L1118 587L1118 586L1106 586L1106 587L1105 587L1105 586L1104 586L1104 587L1103 587L1103 586L1100 586L1100 587L1099 587L1099 586L1098 586L1098 587L1097 587L1097 586L1092 586L1092 587L1091 587L1091 586L1083 586L1083 587L1081 587L1081 586L1070 586L1070 587L1069 587L1069 586L1046 586L1046 587L1044 587L1044 586L1040 586L1040 587L1039 587L1039 586L1019 586L1019 587L1018 587L1018 586L1009 586L1009 587L1007 587L1007 586L1002 586L1002 587L1001 587L1001 586L972 586L972 587L970 587L970 586L962 586L962 587L961 587L961 586L943 586L943 587L942 587L942 586L937 586L937 587L936 587L936 586L935 586L935 587L933 587L933 586L924 586L924 587L923 587L923 586L898 586L898 587L896 587L896 586L881 586L881 587L880 587L880 586L876 586L876 587L875 587L875 586L861 586L861 588L860 588L860 587L859 587L859 586L853 586L853 587L852 587L852 586L827 586L827 587L826 587L826 586L824 586L824 587L822 587L822 586L798 586L798 587L797 587L797 586L791 586L791 587L790 587L790 586L787 586L787 587L785 587L785 586L780 586L780 587L753 587L753 588L750 588L750 589L748 589L748 588L737 588Z" fill="#00a000"/>
<path d="M737 520.5 C760 518.5 785 515 835 513.6 L1620 513.6 C1660 514.6 1690 518 1720 522 C1740 523.4 1800 523.4 1902 523 L1902 511 L1730 511 L1730 510 L737 510 Z" fill="#0cae0c" shape-rendering="auto"/>
<path d="M737 520.5 C760 518.5 785 515 835 513.6 L1620 513.6 C1660 514.6 1690 518 1720 522 C1740 523.4 1800 523.4 1902 523" fill="none" stroke="#14b814" stroke-width="1.4" shape-rendering="auto"/>
<path d="M737 583.5 C760 582.5 800 580.5 850 579 L1620 579 C1660 579.6 1700 581.6 1730 582.6 L1902 583 L1902 588 L1722 588 L1640 585 L800 585 L737 587 Z" fill="#0aab0a" shape-rendering="auto"/>
<path d="M737 583.5 C760 582.5 800 580.5 850 579 L1620 579 C1660 579.6 1700 581.6 1730 582.6 L1902 583" fill="none" stroke="#14bc14" stroke-width="1.6" shape-rendering="auto"/>
<path d="M90 684L97 684L97 683L98 683L98 684L103 684L103 683L104 683L104 684L107 684L107 683L108 683L108 684L173 684L173 683L174 683L174 684L181 684L181 683L182 683L182 684L278 684L278 683L279 683L279 684L287 684L287 683L288 683L288 684L291 684L291 683L292 683L292 684L293 684L293 683L294 683L294 684L308 684L308 683L309 683L309 684L314 684L314 683L315 683L315 684L329 684L329 683L330 683L330 684L337 684L337 683L338 683L338 684L416 684L416 683L417 683L417 684L458 684L458 683L459 683L459 684L498 684L498 683L499 683L499 684L544 684L544 683L545 683L545 684L551 684L551 683L552 683L552 684L598 684L598 683L599 683L599 684L616 684L616 683L617 683L617 684L669 684L669 683L670 683L670 684L674 684L674 683L675 683L675 684L713 684L713 683L714 683L714 684L738 684L738 689L737 689L737 688L713 688L713 689L712 689L712 688L659 688L659 689L658 689L658 688L633 688L633 689L632 689L632 688L613 688L613 689L612 689L612 688L603 688L603 689L602 689L602 688L591 688L591 689L590 689L590 688L528 688L528 689L527 689L527 688L382 688L382 689L381 689L381 688L307 688L307 689L306 689L306 688L299 688L299 689L298 689L298 688L238 688L238 689L237 689L237 688L222 688L222 689L221 689L221 688L151 688L151 689L150 689L150 688L131 688L131 689L130 689L130 688L129 688L129 689L128 689L128 688L127 688L127 689L125 689L125 688L104 688L104 689L103 689L103 688L90 688Z" fill="#a6fcfc"/>
<rect x="737" y="592" width="1" height="96" fill="#a6fcfc"/><rect x="738" y="592" width="1" height="40" fill="#a6fcfc"/>
<path d="M738 599L739 599L739 597L740 597L740 596L741 596L741 587L742 587L742 594L743 594L743 593L744 593L744 595L745 595L745 597L746 597L746 599L747 599L747 602L748 602L748 605L749 605L749 608L750 608L750 612L751 612L751 613L752 613L752 618L753 618L753 610L754 610L754 612L755 612L755 615L757 615L757 625L758 625L758 620L759 620L759 622L760 622L760 624L761 624L761 625L762 625L762 633L763 633L763 631L764 631L764 625L765 625L765 626L766 626L766 632L767 632L767 631L768 631L768 632L769 632L769 635L770 635L770 636L771 636L771 640L773 640L773 642L774 642L774 641L776 641L776 642L777 642L777 638L778 638L778 639L779 639L779 641L780 641L780 640L781 640L781 644L782 644L782 643L783 643L783 645L784 645L784 646L785 646L785 644L786 644L786 652L787 652L787 642L788 642L788 643L789 643L789 642L790 642L790 646L791 646L791 647L793 647L793 646L795 646L795 656L796 656L796 649L797 649L797 650L798 650L798 651L799 651L799 644L800 644L800 654L801 654L801 648L803 648L803 651L804 651L804 649L805 649L805 653L806 653L806 652L807 652L807 653L808 653L808 655L809 655L809 652L810 652L810 655L811 655L811 653L813 653L813 650L814 650L814 655L818 655L818 652L819 652L819 662L820 662L820 657L821 657L821 656L822 656L822 653L823 653L823 652L824 652L824 655L826 655L826 654L827 654L827 657L828 657L828 653L829 653L829 661L830 661L830 658L831 658L831 656L832 656L832 657L833 657L833 653L834 653L834 663L835 663L835 658L837 658L837 656L838 656L838 662L839 662L839 657L840 657L840 658L841 658L841 659L842 659L842 657L843 657L843 666L844 666L844 660L846 660L846 657L847 657L847 656L848 656L848 665L849 665L849 658L851 658L851 660L852 660L852 658L853 658L853 661L854 661L854 659L855 659L855 661L856 661L856 659L857 659L857 657L858 657L858 665L859 665L859 661L860 661L860 659L861 659L861 658L862 658L862 661L863 661L863 659L864 659L864 661L865 661L865 662L866 662L866 659L867 659L867 661L868 661L868 660L869 660L869 662L870 662L870 663L871 663L871 660L872 660L872 665L873 665L873 660L874 660L874 661L875 661L875 663L876 663L876 660L877 660L877 667L878 667L878 661L880 661L880 663L881 663L881 660L882 660L882 669L883 669L883 662L885 662L885 659L886 659L886 662L890 662L890 661L891 661L891 669L892 669L892 662L893 662L893 663L894 663L894 662L895 662L895 661L896 661L896 668L897 668L897 662L899 662L899 664L900 664L900 661L901 661L901 667L902 667L902 663L903 663L903 664L904 664L904 663L905 663L905 661L906 661L906 668L907 668L907 662L908 662L908 663L909 663L909 660L910 660L910 664L911 664L911 662L912 662L912 664L913 664L913 663L914 663L914 660L915 660L915 667L916 667L916 664L918 664L918 663L919 663L919 660L920 660L920 664L921 664L921 662L922 662L922 663L924 663L924 661L925 661L925 669L926 669L926 662L927 662L927 663L928 663L928 662L929 662L929 661L930 661L930 664L931 664L931 663L932 663L932 664L933 664L933 661L934 661L934 670L935 670L935 664L936 664L936 663L938 663L938 662L939 662L939 664L940 664L940 663L941 663L941 665L943 665L943 662L944 662L944 664L945 664L945 665L948 665L948 661L949 661L949 669L950 669L950 664L953 664L953 662L954 662L954 665L955 665L955 663L956 663L956 665L957 665L957 662L958 662L958 668L959 668L959 664L960 664L960 665L962 665L962 661L963 661L963 668L964 668L964 663L966 663L966 664L967 664L967 662L968 662L968 665L970 665L970 663L971 663L971 665L972 665L972 661L973 661L973 664L975 664L975 663L977 663L977 661L978 661L978 669L979 669L979 665L980 665L980 663L981 663L981 661L982 661L982 670L983 670L983 664L986 664L986 661L987 661L987 668L988 668L988 663L990 663L990 665L991 665L991 662L992 662L992 668L993 668L993 664L994 664L994 663L995 663L995 664L996 664L996 662L997 662L997 671L998 671L998 664L1000 664L1000 665L1001 665L1001 662L1002 662L1002 667L1003 667L1003 664L1004 664L1004 666L1005 666L1005 661L1006 661L1006 671L1007 671L1007 664L1008 664L1008 665L1010 665L1010 662L1011 662L1011 671L1012 671L1012 664L1014 664L1014 665L1015 665L1015 662L1016 662L1016 671L1017 671L1017 666L1018 666L1018 665L1019 665L1019 663L1020 663L1020 661L1021 661L1021 663L1023 663L1023 665L1024 665L1024 664L1025 664L1025 661L1026 661L1026 668L1027 668L1027 664L1029 664L1029 662L1030 662L1030 664L1031 664L1031 663L1032 663L1032 664L1033 664L1033 665L1034 665L1034 661L1035 661L1035 670L1036 670L1036 663L1037 663L1037 665L1038 665L1038 664L1039 664L1039 662L1040 662L1040 666L1041 666L1041 663L1042 663L1042 665L1044 665L1044 661L1045 661L1045 665L1048 665L1048 666L1049 666L1049 662L1050 662L1050 669L1051 669L1051 663L1052 663L1052 665L1053 665L1053 661L1054 661L1054 667L1055 667L1055 664L1056 664L1056 665L1058 665L1058 661L1059 661L1059 671L1060 671L1060 665L1061 665L1061 664L1062 664L1062 663L1063 663L1063 661L1064 661L1064 666L1065 666L1065 665L1066 665L1066 663L1067 663L1067 665L1068 665L1068 661L1069 661L1069 669L1070 669L1070 663L1071 663L1071 664L1073 664L1073 662L1074 662L1074 671L1075 671L1075 665L1076 665L1076 663L1077 663L1077 661L1078 661L1078 668L1079 668L1079 665L1080 665L1080 663L1082 663L1082 661L1083 661L1083 668L1084 668L1084 666L1085 666L1085 664L1086 664L1086 665L1087 665L1087 661L1088 661L1088 671L1089 671L1089 665L1090 665L1090 663L1091 663L1091 664L1092 664L1092 662L1093 662L1093 669L1094 669L1094 663L1096 663L1096 665L1097 665L1097 661L1098 661L1098 671L1099 671L1099 664L1101 664L1101 661L1102 661L1102 664L1103 664L1103 663L1106 663L1106 661L1107 661L1107 669L1108 669L1108 663L1109 663L1109 664L1111 664L1111 662L1112 662L1112 670L1113 670L1113 665L1116 665L1116 662L1117 662L1117 664L1118 664L1118 665L1119 665L1119 664L1120 664L1120 666L1121 666L1121 661L1122 661L1122 665L1123 665L1123 663L1125 663L1125 662L1126 662L1126 671L1127 671L1127 663L1128 663L1128 666L1129 666L1129 663L1130 663L1130 662L1131 662L1131 671L1132 671L1132 664L1134 664L1134 663L1136 663L1136 671L1137 671L1137 665L1138 665L1138 663L1139 663L1139 666L1140 666L1140 662L1141 662L1141 671L1142 671L1142 665L1143 665L1143 663L1145 663L1145 661L1146 661L1146 668L1147 668L1147 665L1148 665L1148 663L1149 663L1149 661L1150 661L1150 669L1151 669L1151 663L1152 663L1152 666L1153 666L1153 664L1154 664L1154 661L1155 661L1155 665L1157 665L1157 663L1159 663L1159 661L1160 661L1160 668L1161 668L1161 663L1162 663L1162 665L1163 665L1163 663L1164 663L1164 662L1165 662L1165 669L1166 669L1166 664L1169 664L1169 662L1170 662L1170 668L1171 668L1171 664L1173 664L1173 662L1174 662L1174 668L1175 668L1175 664L1176 664L1176 663L1177 663L1177 665L1178 665L1178 661L1179 661L1179 667L1180 667L1180 665L1181 665L1181 666L1182 666L1182 664L1183 664L1183 661L1184 661L1184 670L1185 670L1185 665L1186 665L1186 663L1187 663L1187 665L1188 665L1188 662L1189 662L1189 670L1190 670L1190 665L1192 665L1192 664L1193 664L1193 662L1194 662L1194 668L1195 668L1195 663L1197 663L1197 661L1198 661L1198 671L1199 671L1199 663L1201 663L1201 664L1202 664L1202 661L1203 661L1203 664L1204 664L1204 663L1206 663L1206 664L1207 664L1207 661L1208 661L1208 670L1209 670L1209 664L1210 664L1210 665L1211 665L1211 663L1212 663L1212 662L1213 662L1213 669L1214 669L1214 664L1215 664L1215 663L1216 663L1216 665L1217 665L1217 662L1218 662L1218 664L1219 664L1219 663L1220 663L1220 665L1221 665L1221 661L1222 661L1222 665L1224 665L1224 664L1225 664L1225 663L1227 663L1227 664L1228 664L1228 665L1230 665L1230 664L1231 664L1231 661L1232 661L1232 670L1233 670L1233 665L1234 665L1234 663L1235 663L1235 665L1236 665L1236 661L1237 661L1237 668L1238 668L1238 665L1240 665L1240 664L1241 664L1241 662L1242 662L1242 665L1243 665L1243 663L1244 663L1244 664L1245 664L1245 661L1246 661L1246 666L1247 666L1247 664L1248 664L1248 663L1249 663L1249 664L1250 664L1250 661L1251 661L1251 668L1252 668L1252 665L1255 665L1255 661L1256 661L1256 665L1257 665L1257 664L1258 664L1258 665L1259 665L1259 664L1260 664L1260 662L1261 662L1261 670L1262 670L1262 665L1263 665L1263 664L1265 664L1265 662L1266 662L1266 664L1267 664L1267 663L1268 663L1268 664L1269 664L1269 662L1270 662L1270 668L1271 668L1271 663L1272 663L1272 666L1273 666L1273 663L1274 663L1274 661L1275 661L1275 665L1276 665L1276 663L1277 663L1277 665L1279 665L1279 661L1280 661L1280 670L1281 670L1281 665L1284 665L1284 662L1285 662L1285 668L1286 668L1286 664L1287 664L1287 665L1288 665L1288 664L1289 664L1289 662L1290 662L1290 664L1292 664L1292 663L1293 663L1293 661L1294 661L1294 669L1295 669L1295 663L1296 663L1296 665L1297 665L1297 663L1299 663L1299 665L1300 665L1300 664L1301 664L1301 663L1303 663L1303 661L1304 661L1304 670L1305 670L1305 663L1306 663L1306 666L1307 666L1307 663L1308 663L1308 662L1309 662L1309 666L1310 666L1310 663L1311 663L1311 665L1312 665L1312 663L1313 663L1313 661L1314 661L1314 669L1315 669L1315 665L1316 665L1316 664L1317 664L1317 662L1318 662L1318 669L1319 669L1319 666L1320 666L1320 665L1321 665L1321 663L1322 663L1322 662L1323 662L1323 665L1324 665L1324 663L1325 663L1325 664L1326 664L1326 665L1327 665L1327 662L1328 662L1328 671L1329 671L1329 664L1330 664L1330 663L1331 663L1331 664L1332 664L1332 662L1333 662L1333 671L1334 671L1334 663L1335 663L1335 664L1336 664L1336 663L1337 663L1337 662L1338 662L1338 669L1339 669L1339 664L1340 664L1340 666L1341 666L1341 661L1342 661L1342 670L1343 670L1343 663L1344 663L1344 664L1346 664L1346 663L1347 663L1347 669L1348 669L1348 665L1349 665L1349 663L1351 663L1351 662L1352 662L1352 664L1353 664L1353 665L1355 665L1355 664L1356 664L1356 662L1357 662L1357 670L1358 670L1358 665L1359 665L1359 663L1360 663L1360 665L1361 665L1361 661L1362 661L1362 664L1363 664L1363 663L1365 663L1365 662L1366 662L1366 671L1367 671L1367 665L1368 665L1368 666L1369 666L1369 664L1370 664L1370 662L1371 662L1371 665L1372 665L1372 663L1373 663L1373 665L1374 665L1374 663L1375 663L1375 662L1376 662L1376 664L1377 664L1377 663L1378 663L1378 664L1379 664L1379 665L1380 665L1380 661L1381 661L1381 670L1382 670L1382 663L1383 663L1383 665L1384 665L1384 663L1385 663L1385 662L1386 662L1386 664L1389 664L1389 662L1390 662L1390 669L1391 669L1391 665L1393 665L1393 663L1394 663L1394 662L1395 662L1395 665L1396 665L1396 664L1397 664L1397 663L1398 663L1398 665L1399 665L1399 661L1400 661L1400 666L1402 666L1402 664L1403 664L1403 666L1404 666L1404 661L1405 661L1405 669L1406 669L1406 665L1407 665L1407 663L1408 663L1408 664L1409 664L1409 662L1410 662L1410 671L1411 671L1411 664L1412 664L1412 665L1413 665L1413 661L1414 661L1414 670L1415 670L1415 664L1417 664L1417 663L1418 663L1418 662L1419 662L1419 670L1420 670L1420 663L1421 663L1421 665L1422 665L1422 666L1423 666L1423 662L1424 662L1424 671L1425 671L1425 664L1426 664L1426 663L1427 663L1427 665L1428 665L1428 661L1429 661L1429 664L1431 664L1431 665L1433 665L1433 662L1434 662L1434 669L1435 669L1435 664L1436 664L1436 665L1437 665L1437 662L1438 662L1438 670L1439 670L1439 663L1440 663L1440 666L1441 666L1441 663L1442 663L1442 661L1443 661L1443 668L1444 668L1444 666L1445 666L1445 665L1446 665L1446 663L1447 663L1447 662L1448 662L1448 668L1449 668L1449 664L1450 664L1450 663L1451 663L1451 665L1452 665L1452 662L1453 662L1453 671L1454 671L1454 664L1455 664L1455 666L1456 666L1456 665L1457 665L1457 662L1458 662L1458 664L1460 664L1460 665L1461 665L1461 662L1462 662L1462 671L1463 671L1463 663L1466 663L1466 662L1467 662L1467 670L1468 670L1468 663L1469 663L1469 664L1470 664L1470 665L1471 665L1471 662L1472 662L1472 667L1473 667L1473 664L1476 664L1476 662L1477 662L1477 670L1478 670L1478 664L1479 664L1479 663L1481 663L1481 661L1482 661L1482 669L1483 669L1483 664L1484 664L1484 665L1485 665L1485 662L1486 662L1486 668L1487 668L1487 663L1488 663L1488 665L1489 665L1489 664L1490 664L1490 662L1491 662L1491 671L1492 671L1492 664L1493 664L1493 666L1494 666L1494 664L1495 664L1495 661L1496 661L1496 669L1497 669L1497 664L1500 664L1500 662L1501 662L1501 669L1502 669L1502 664L1503 664L1503 663L1504 663L1504 664L1505 664L1505 662L1506 662L1506 670L1507 670L1507 664L1508 664L1508 665L1509 665L1509 662L1510 662L1510 670L1511 670L1511 663L1512 663L1512 664L1513 664L1513 663L1514 663L1514 662L1515 662L1515 664L1518 664L1518 663L1519 663L1519 662L1520 662L1520 664L1521 664L1521 665L1522 665L1522 663L1525 663L1525 670L1526 670L1526 664L1527 664L1527 665L1528 665L1528 664L1529 664L1529 662L1530 662L1530 671L1531 671L1531 663L1532 663L1532 664L1533 664L1533 662L1534 662L1534 668L1535 668L1535 663L1536 663L1536 665L1537 665L1537 663L1538 663L1538 662L1539 662L1539 664L1540 664L1540 665L1541 665L1541 663L1543 663L1543 661L1544 661L1544 664L1545 664L1545 665L1547 665L1547 664L1548 664L1548 661L1549 661L1549 671L1550 671L1550 664L1552 664L1552 663L1553 663L1553 662L1554 662L1554 665L1555 665L1555 663L1556 663L1556 664L1557 664L1557 662L1558 662L1558 668L1559 668L1559 664L1560 664L1560 665L1562 665L1562 661L1563 661L1563 664L1564 664L1564 665L1565 665L1565 664L1566 664L1566 663L1567 663L1567 661L1568 661L1568 669L1569 669L1569 664L1570 664L1570 663L1571 663L1571 662L1573 662L1573 664L1574 664L1574 663L1576 663L1576 665L1577 665L1577 660L1578 660L1578 663L1579 663L1579 665L1580 665L1580 663L1581 663L1581 662L1582 662L1582 665L1583 665L1583 662L1586 662L1586 660L1587 660L1587 668L1588 668L1588 661L1589 661L1589 663L1590 663L1590 664L1591 664L1591 661L1592 661L1592 662L1593 662L1593 663L1594 663L1594 661L1595 661L1595 662L1596 662L1596 660L1597 660L1597 668L1598 668L1598 662L1600 662L1600 661L1601 661L1601 659L1602 659L1602 668L1603 668L1603 661L1604 661L1604 660L1605 660L1605 659L1606 659L1606 667L1607 667L1607 660L1608 660L1608 661L1609 661L1609 660L1610 660L1610 659L1611 659L1611 661L1612 661L1612 660L1613 660L1613 661L1614 661L1614 659L1615 659L1615 658L1616 658L1616 660L1617 660L1617 659L1619 659L1619 658L1620 658L1620 657L1621 657L1621 664L1622 664L1622 659L1623 659L1623 658L1624 658L1624 657L1625 657L1625 654L1626 654L1626 661L1627 661L1627 656L1628 656L1628 657L1629 657L1629 653L1630 653L1630 662L1631 662L1631 655L1633 655L1633 654L1634 654L1634 652L1635 652L1635 661L1636 661L1636 653L1637 653L1637 652L1638 652L1638 653L1639 653L1639 649L1640 649L1640 652L1642 652L1642 650L1644 650L1644 647L1645 647L1645 656L1646 656L1646 648L1649 648L1649 643L1650 643L1650 650L1651 650L1651 643L1652 643L1652 641L1653 641L1653 639L1654 639L1654 643L1655 643L1655 640L1656 640L1656 641L1658 641L1658 639L1659 639L1659 642L1661 642L1661 640L1663 640L1663 637L1664 637L1664 639L1665 639L1665 637L1667 637L1667 633L1668 633L1668 629L1669 629L1669 631L1670 631L1670 626L1671 626L1671 629L1672 629L1672 630L1674 630L1674 635L1675 635L1675 627L1676 627L1676 626L1677 626L1677 624L1678 624L1678 627L1679 627L1679 623L1680 623L1680 622L1681 622L1681 623L1682 623L1682 620L1683 620L1683 623L1684 623L1684 620L1686 620L1686 621L1687 621L1687 619L1688 619L1688 624L1689 624L1689 622L1690 622L1690 621L1691 621L1691 619L1692 619L1692 614L1693 614L1693 617L1694 617L1694 611L1695 611L1695 607L1696 607L1696 604L1697 604L1697 605L1698 605L1698 611L1699 611L1699 608L1700 608L1700 610L1701 610L1701 611L1702 611L1702 617L1703 617L1703 608L1704 608L1704 605L1705 605L1705 601L1706 601L1706 599L1707 599L1707 602L1708 602L1708 599L1710 599L1710 597L1711 597L1711 595L1712 595L1712 597L1713 597L1713 593L1714 593L1714 605L1713 605L1713 606L1712 606L1712 608L1711 608L1711 604L1710 604L1710 610L1709 610L1709 609L1707 609L1707 610L1706 610L1706 607L1705 607L1705 617L1704 617L1704 621L1703 621L1703 626L1702 626L1702 623L1701 623L1701 619L1700 619L1700 622L1699 622L1699 619L1698 619L1698 618L1697 618L1697 615L1695 615L1695 623L1694 623L1694 624L1693 624L1693 627L1692 627L1692 631L1691 631L1691 633L1690 633L1690 635L1689 635L1689 633L1688 633L1688 632L1686 632L1686 634L1685 634L1685 633L1684 633L1684 632L1682 632L1682 629L1681 629L1681 635L1680 635L1680 634L1679 634L1679 633L1678 633L1678 634L1677 634L1677 631L1676 631L1676 639L1675 639L1675 642L1674 642L1674 647L1673 647L1673 645L1672 645L1672 643L1671 643L1671 644L1670 644L1670 646L1669 646L1669 647L1668 647L1668 651L1667 651L1667 647L1666 647L1666 656L1665 656L1665 655L1664 655L1664 654L1663 654L1663 656L1662 656L1662 658L1661 658L1661 656L1660 656L1660 657L1659 657L1659 658L1658 658L1658 657L1657 657L1657 662L1656 662L1656 657L1655 657L1655 659L1654 659L1654 660L1653 660L1653 657L1652 657L1652 665L1651 665L1651 663L1650 663L1650 664L1649 664L1649 666L1648 666L1648 663L1647 663L1647 669L1646 669L1646 666L1645 666L1645 669L1644 669L1644 670L1643 670L1643 669L1642 669L1642 672L1641 672L1641 671L1640 671L1640 670L1639 670L1639 671L1638 671L1638 675L1637 675L1637 673L1636 673L1636 674L1634 674L1634 669L1633 669L1633 677L1632 677L1632 675L1629 675L1629 674L1628 674L1628 678L1627 678L1627 674L1626 674L1626 677L1625 677L1625 676L1624 676L1624 675L1623 675L1623 680L1622 680L1622 677L1621 677L1621 678L1619 678L1619 674L1618 674L1618 680L1617 680L1617 676L1616 676L1616 678L1614 678L1614 681L1613 681L1613 679L1612 679L1612 680L1611 680L1611 678L1610 678L1610 679L1609 679L1609 682L1608 682L1608 680L1607 680L1607 679L1606 679L1606 680L1605 680L1605 674L1604 674L1604 683L1603 683L1603 682L1602 682L1602 681L1599 681L1599 683L1598 683L1598 680L1597 680L1597 681L1596 681L1596 682L1595 682L1595 676L1594 676L1594 684L1593 684L1593 683L1592 683L1592 682L1591 682L1591 683L1590 683L1590 686L1589 686L1589 682L1588 682L1588 681L1587 681L1587 682L1586 682L1586 679L1585 679L1585 686L1584 686L1584 684L1583 684L1583 683L1582 683L1582 681L1581 681L1581 676L1580 676L1580 686L1579 686L1579 684L1578 684L1578 682L1576 682L1576 677L1575 677L1575 686L1574 686L1574 683L1573 683L1573 682L1571 682L1571 681L1570 681L1570 685L1569 685L1569 684L1567 684L1567 677L1566 677L1566 685L1565 685L1565 683L1564 683L1564 681L1563 681L1563 684L1562 684L1562 675L1561 675L1561 686L1560 686L1560 684L1559 684L1559 683L1557 683L1557 682L1556 682L1556 685L1555 685L1555 682L1554 682L1554 681L1553 681L1553 683L1552 683L1552 679L1551 679L1551 685L1550 685L1550 681L1549 681L1549 682L1547 682L1547 681L1546 681L1546 684L1545 684L1545 681L1544 681L1544 684L1543 684L1543 681L1542 681L1542 686L1541 686L1541 682L1539 682L1539 683L1538 683L1538 676L1537 676L1537 686L1536 686L1536 682L1534 682L1534 683L1533 683L1533 679L1532 679L1532 686L1531 686L1531 681L1530 681L1530 684L1528 684L1528 677L1527 677L1527 684L1526 684L1526 681L1525 681L1525 683L1523 683L1523 676L1522 676L1522 685L1521 685L1521 682L1519 682L1519 681L1518 681L1518 685L1517 685L1517 682L1515 682L1515 681L1514 681L1514 677L1513 677L1513 685L1512 685L1512 683L1511 683L1511 682L1510 682L1510 681L1509 681L1509 678L1508 678L1508 685L1507 685L1507 681L1506 681L1506 682L1504 682L1504 681L1503 681L1503 685L1502 685L1502 681L1500 681L1500 684L1499 684L1499 683L1498 683L1498 684L1497 684L1497 681L1496 681L1496 682L1495 682L1495 681L1494 681L1494 685L1493 685L1493 682L1491 682L1491 684L1490 684L1490 682L1489 682L1489 685L1488 685L1488 683L1487 683L1487 681L1486 681L1486 683L1485 683L1485 682L1484 682L1484 684L1483 684L1483 681L1482 681L1482 683L1481 683L1481 681L1480 681L1480 678L1479 678L1479 686L1478 686L1478 684L1477 684L1477 681L1476 681L1476 683L1475 683L1475 678L1474 678L1474 685L1473 685L1473 682L1472 682L1472 683L1471 683L1471 678L1470 678L1470 685L1469 685L1469 683L1468 683L1468 681L1467 681L1467 682L1466 682L1466 675L1465 675L1465 684L1464 684L1464 683L1461 683L1461 678L1460 678L1460 684L1459 684L1459 682L1458 682L1458 683L1457 683L1457 682L1456 682L1456 679L1455 679L1455 685L1454 685L1454 683L1453 683L1453 684L1452 684L1452 683L1450 683L1450 685L1449 685L1449 684L1448 684L1448 681L1447 681L1447 679L1446 679L1446 686L1445 686L1445 684L1444 684L1444 682L1442 682L1442 678L1441 678L1441 685L1440 685L1440 683L1439 683L1439 682L1438 682L1438 683L1437 683L1437 679L1436 679L1436 686L1435 686L1435 682L1434 682L1434 683L1433 683L1433 684L1432 684L1432 676L1431 676L1431 684L1430 684L1430 681L1429 681L1429 683L1428 683L1428 681L1427 681L1427 678L1426 678L1426 685L1425 685L1425 683L1423 683L1423 681L1422 681L1422 684L1420 684L1420 682L1418 682L1418 677L1417 677L1417 686L1416 686L1416 682L1414 682L1414 683L1413 683L1413 678L1412 678L1412 686L1411 686L1411 681L1410 681L1410 682L1409 682L1409 681L1408 681L1408 679L1407 679L1407 685L1406 685L1406 681L1405 681L1405 683L1404 683L1404 681L1403 681L1403 677L1402 677L1402 684L1401 684L1401 681L1400 681L1400 684L1399 684L1399 676L1398 676L1398 685L1397 685L1397 683L1396 683L1396 684L1395 684L1395 683L1394 683L1394 678L1393 678L1393 684L1392 684L1392 681L1390 681L1390 682L1388 682L1388 685L1387 685L1387 683L1386 683L1386 682L1384 682L1384 683L1383 683L1383 684L1382 684L1382 682L1379 682L1379 676L1378 676L1378 685L1377 685L1377 681L1376 681L1376 682L1375 682L1375 678L1374 678L1374 686L1373 686L1373 681L1372 681L1372 682L1371 682L1371 681L1370 681L1370 676L1369 676L1369 684L1368 684L1368 683L1367 683L1367 682L1366 682L1366 681L1365 681L1365 682L1364 682L1364 684L1363 684L1363 681L1362 681L1362 683L1359 683L1359 685L1358 685L1358 682L1357 682L1357 681L1356 681L1356 683L1355 683L1355 676L1354 676L1354 684L1353 684L1353 682L1352 682L1352 684L1351 684L1351 683L1350 683L1350 685L1349 685L1349 682L1348 682L1348 683L1347 683L1347 682L1346 682L1346 676L1345 676L1345 686L1344 686L1344 682L1342 682L1342 681L1341 681L1341 677L1340 677L1340 685L1339 685L1339 684L1338 684L1338 681L1336 681L1336 679L1335 679L1335 685L1334 685L1334 681L1332 681L1332 684L1331 684L1331 682L1330 682L1330 684L1329 684L1329 681L1328 681L1328 682L1327 682L1327 676L1326 676L1326 684L1325 684L1325 682L1324 682L1324 683L1323 683L1323 682L1322 682L1322 677L1321 677L1321 685L1320 685L1320 682L1319 682L1319 681L1318 681L1318 682L1316 682L1316 684L1315 684L1315 681L1314 681L1314 684L1313 684L1313 683L1312 683L1312 676L1311 676L1311 685L1310 685L1310 683L1309 683L1309 684L1307 684L1307 676L1306 676L1306 684L1305 684L1305 683L1304 683L1304 681L1303 681L1303 676L1302 676L1302 684L1301 684L1301 683L1298 683L1298 676L1297 676L1297 685L1296 685L1296 684L1295 684L1295 682L1294 682L1294 681L1293 681L1293 679L1292 679L1292 686L1291 686L1291 681L1290 681L1290 683L1288 683L1288 677L1287 677L1287 685L1286 685L1286 684L1285 684L1285 683L1284 683L1284 681L1283 681L1283 676L1282 676L1282 685L1281 685L1281 683L1279 683L1279 675L1278 675L1278 686L1277 686L1277 681L1276 681L1276 683L1275 683L1275 684L1274 684L1274 678L1273 678L1273 685L1272 685L1272 683L1271 683L1271 682L1270 682L1270 681L1269 681L1269 676L1268 676L1268 684L1267 684L1267 681L1266 681L1266 682L1264 682L1264 678L1263 678L1263 685L1262 685L1262 682L1261 682L1261 681L1260 681L1260 683L1259 683L1259 677L1258 677L1258 685L1257 685L1257 682L1255 682L1255 676L1254 676L1254 685L1253 685L1253 681L1252 681L1252 682L1250 682L1250 677L1249 677L1249 685L1248 685L1248 682L1247 682L1247 684L1246 684L1246 683L1245 683L1245 677L1244 677L1244 685L1243 685L1243 683L1242 683L1242 682L1240 682L1240 677L1239 677L1239 684L1238 684L1238 682L1236 682L1236 683L1235 683L1235 682L1234 682L1234 684L1233 684L1233 681L1232 681L1232 684L1231 684L1231 678L1230 678L1230 685L1229 685L1229 682L1226 682L1226 681L1225 681L1225 685L1224 685L1224 684L1223 684L1223 683L1221 683L1221 679L1220 679L1220 684L1219 684L1219 682L1218 682L1218 681L1217 681L1217 683L1216 683L1216 679L1215 679L1215 685L1214 685L1214 684L1213 684L1213 682L1212 682L1212 684L1211 684L1211 678L1210 678L1210 684L1209 684L1209 681L1206 681L1206 684L1205 684L1205 683L1204 683L1204 681L1202 681L1202 676L1201 676L1201 685L1200 685L1200 683L1199 683L1199 682L1196 682L1196 684L1195 684L1195 682L1193 682L1193 681L1191 681L1191 685L1190 685L1190 683L1188 683L1188 681L1187 681L1187 683L1186 683L1186 686L1185 686L1185 682L1184 682L1184 683L1183 683L1183 676L1182 676L1182 685L1181 685L1181 681L1180 681L1180 682L1178 682L1178 677L1177 677L1177 685L1176 685L1176 682L1173 682L1173 678L1172 678L1172 686L1171 686L1171 682L1168 682L1168 678L1167 678L1167 686L1166 686L1166 683L1165 683L1165 681L1164 681L1164 682L1163 682L1163 678L1162 678L1162 685L1161 685L1161 682L1159 682L1159 681L1158 681L1158 685L1157 685L1157 681L1156 681L1156 683L1155 683L1155 681L1154 681L1154 677L1153 677L1153 684L1151 684L1151 682L1150 682L1150 681L1149 681L1149 678L1148 678L1148 685L1147 685L1147 682L1144 682L1144 679L1143 679L1143 685L1142 685L1142 682L1140 682L1140 684L1139 684L1139 679L1138 679L1138 685L1137 685L1137 684L1136 684L1136 682L1134 682L1134 685L1133 685L1133 681L1131 681L1131 682L1129 682L1129 684L1128 684L1128 682L1127 682L1127 684L1126 684L1126 682L1125 682L1125 676L1124 676L1124 685L1123 685L1123 681L1122 681L1122 684L1121 684L1121 683L1120 683L1120 679L1119 679L1119 686L1118 686L1118 682L1117 682L1117 684L1116 684L1116 682L1115 682L1115 676L1114 676L1114 684L1113 684L1113 681L1112 681L1112 684L1111 684L1111 677L1110 677L1110 686L1109 686L1109 683L1106 683L1106 677L1105 677L1105 685L1104 685L1104 681L1103 681L1103 683L1102 683L1102 681L1101 681L1101 677L1100 677L1100 685L1099 685L1099 682L1098 682L1098 683L1096 683L1096 681L1095 681L1095 686L1094 686L1094 683L1092 683L1092 682L1091 682L1091 678L1090 678L1090 686L1089 686L1089 683L1088 683L1088 681L1087 681L1087 682L1086 682L1086 685L1085 685L1085 682L1083 682L1083 683L1082 683L1082 675L1081 675L1081 685L1080 685L1080 683L1079 683L1079 682L1078 682L1078 681L1076 681L1076 685L1075 685L1075 682L1074 682L1074 683L1073 683L1073 684L1072 684L1072 683L1071 683L1071 685L1070 685L1070 683L1069 683L1069 682L1068 682L1068 684L1067 684L1067 675L1066 675L1066 684L1064 684L1064 682L1063 682L1063 678L1062 678L1062 684L1060 684L1060 681L1059 681L1059 684L1058 684L1058 678L1057 678L1057 685L1056 685L1056 683L1055 683L1055 684L1054 684L1054 681L1052 681L1052 685L1051 685L1051 681L1050 681L1050 683L1048 683L1048 681L1047 681L1047 684L1046 684L1046 683L1045 683L1045 682L1043 682L1043 677L1042 677L1042 686L1041 686L1041 682L1040 682L1040 684L1039 684L1039 678L1038 678L1038 685L1037 685L1037 683L1036 683L1036 682L1035 682L1035 683L1034 683L1034 679L1033 679L1033 684L1032 684L1032 683L1030 683L1030 681L1029 681L1029 678L1028 678L1028 684L1027 684L1027 681L1026 681L1026 683L1025 683L1025 682L1024 682L1024 679L1023 679L1023 685L1022 685L1022 684L1021 684L1021 681L1020 681L1020 682L1019 682L1019 676L1018 676L1018 685L1017 685L1017 681L1016 681L1016 683L1015 683L1015 676L1014 676L1014 684L1013 684L1013 681L1012 681L1012 683L1011 683L1011 681L1010 681L1010 678L1009 678L1009 684L1008 684L1008 682L1007 682L1007 681L1006 681L1006 683L1005 683L1005 675L1004 675L1004 684L1003 684L1003 681L1002 681L1002 683L1001 683L1001 681L1000 681L1000 675L999 675L999 684L998 684L998 683L996 683L996 681L995 681L995 676L994 676L994 685L993 685L993 682L992 682L992 683L991 683L991 676L990 676L990 685L989 685L989 682L988 682L988 683L986 683L986 678L985 678L985 685L984 685L984 681L983 681L983 684L981 684L981 678L980 678L980 685L979 685L979 683L976 683L976 681L975 681L975 685L974 685L974 681L973 681L973 682L972 682L972 683L971 683L971 676L970 676L970 685L969 685L969 681L968 681L968 682L967 682L967 679L966 679L966 685L965 685L965 684L964 684L964 682L963 682L963 681L962 681L962 678L961 678L961 686L960 686L960 682L957 682L957 679L956 679L956 685L955 685L955 684L954 684L954 681L952 681L952 679L951 679L951 686L950 686L950 682L949 682L949 683L947 683L947 677L946 677L946 684L945 684L945 683L944 683L944 681L943 681L943 676L942 676L942 684L941 684L941 683L940 683L940 681L939 681L939 683L938 683L938 681L937 681L937 685L936 685L936 682L935 682L935 683L934 683L934 680L933 680L933 677L932 677L932 683L931 683L931 682L930 682L930 681L929 681L929 683L928 683L928 677L927 677L927 684L926 684L926 682L924 682L924 683L923 683L923 682L922 682L922 683L921 683L921 681L920 681L920 682L919 682L919 678L918 678L918 683L917 683L917 681L915 681L915 680L914 680L914 681L913 681L913 683L912 683L912 681L910 681L910 680L909 680L909 681L908 681L908 683L907 683L907 681L904 681L904 679L903 679L903 683L902 683L902 679L901 679L901 681L900 681L900 680L899 680L899 677L898 677L898 684L897 684L897 679L896 679L896 680L895 680L895 675L894 675L894 682L893 682L893 679L892 679L892 680L891 680L891 681L890 681L890 675L889 675L889 683L888 683L888 681L886 681L886 679L885 679L885 676L884 676L884 682L883 682L883 680L882 680L882 681L881 681L881 679L880 679L880 676L879 676L879 683L878 683L878 680L877 680L877 678L876 678L876 680L875 680L875 674L874 674L874 682L873 682L873 680L872 680L872 679L871 679L871 678L870 678L870 681L869 681L869 678L868 678L868 680L866 680L866 674L865 674L865 681L864 681L864 679L863 679L863 678L861 678L861 672L860 672L860 681L859 681L859 677L856 677L856 671L855 671L855 681L854 681L854 676L853 676L853 678L852 678L852 679L851 679L851 674L850 674L850 679L849 679L849 678L848 678L848 676L846 676L846 679L845 679L845 678L844 678L844 676L843 676L843 677L842 677L842 670L841 670L841 679L840 679L840 675L839 675L839 677L838 677L838 674L837 674L837 671L836 671L836 677L835 677L835 675L834 675L834 673L833 673L833 677L832 677L832 676L831 676L831 678L830 678L830 674L828 674L828 673L826 673L826 675L825 675L825 671L824 671L824 674L823 674L823 668L822 668L822 676L821 676L821 675L819 675L819 674L818 674L818 671L817 671L817 675L816 675L816 671L814 671L814 670L813 670L813 668L812 668L812 672L811 672L811 668L810 668L810 671L807 671L807 672L806 672L806 669L805 669L805 667L804 667L804 668L803 668L803 660L802 660L802 669L801 669L801 667L800 667L800 665L799 665L799 669L798 669L798 671L797 671L797 669L796 669L796 666L795 666L795 667L794 667L794 663L793 663L793 667L792 667L792 662L791 662L791 661L790 661L790 660L789 660L789 656L788 656L788 660L787 660L787 663L786 663L786 661L784 661L784 654L783 654L783 660L782 660L782 656L781 656L781 655L780 655L780 654L779 654L779 653L778 653L778 656L777 656L777 651L776 651L776 659L775 659L775 657L774 657L774 658L773 658L773 655L772 655L772 654L770 654L770 647L769 647L769 649L768 649L768 646L767 646L767 642L766 642L766 639L765 639L765 635L764 635L764 645L763 645L763 642L762 642L762 641L761 641L761 638L760 638L760 632L759 632L759 638L758 638L758 635L757 635L757 632L756 632L756 627L755 627L755 621L754 621L754 625L753 625L753 628L752 628L752 625L751 625L751 620L750 620L750 621L749 621L749 616L748 616L748 613L747 613L747 610L746 610L746 607L745 607L745 606L744 606L744 602L743 602L743 601L742 601L742 597L741 597L741 607L740 607L740 610L739 610L739 611L738 611Z" fill="#a6fcfc"/>
<path d="M1714 590L1902 590L1902 602L1897 602L1897 603L1896 603L1896 602L1858 602L1858 603L1857 603L1857 602L1848 602L1848 603L1846 603L1846 602L1804 602L1804 603L1803 603L1803 602L1764 602L1764 603L1763 603L1763 602L1716 602L1716 603L1715 603L1715 602L1714 602Z" fill="#a6fcfc"/>
<rect x="1716" y="592" width="185" height="8" fill="#b4fcfc"/>
<path d="M90 809L92 809L92 808L93 808L93 809L95 809L95 808L96 808L96 809L100 809L100 808L101 808L101 809L118 809L118 808L119 808L119 809L120 809L120 808L121 808L121 809L128 809L128 808L129 808L129 809L148 809L148 808L149 808L149 809L159 809L159 808L160 808L160 809L186 809L186 808L187 808L187 809L209 809L209 808L210 808L210 809L211 809L211 808L212 808L212 809L214 809L214 808L215 808L215 809L225 809L225 808L226 808L226 809L233 809L233 808L234 808L234 809L236 809L236 808L238 808L238 809L310 809L310 808L311 808L311 809L332 809L332 808L333 808L333 809L335 809L335 808L336 808L336 809L390 809L390 808L392 808L392 809L408 809L408 808L409 808L409 809L416 809L416 808L417 808L417 809L453 809L453 808L454 808L454 809L466 809L466 808L467 808L467 809L494 809L494 808L495 808L495 809L527 809L527 808L528 808L528 809L555 809L555 808L556 808L556 809L569 809L569 808L570 808L570 809L592 809L592 808L593 808L593 809L606 809L606 808L607 808L607 809L652 809L652 808L653 808L653 809L665 809L665 808L666 808L666 809L667 809L667 808L668 808L668 809L678 809L678 808L679 808L679 809L694 809L694 808L695 808L695 809L737 809L737 808L738 808L738 813L735 813L735 814L734 814L734 813L733 813L733 814L732 814L732 813L720 813L720 814L719 814L719 813L662 813L662 814L661 814L661 813L656 813L656 814L655 814L655 813L650 813L650 814L649 814L649 813L636 813L636 814L635 814L635 813L607 813L607 814L606 814L606 813L590 813L590 814L589 814L589 813L553 813L553 814L552 814L552 813L548 813L548 814L547 814L547 813L538 813L538 814L537 814L537 813L511 813L511 814L510 814L510 813L507 813L507 814L506 814L506 813L504 813L504 814L503 814L503 813L499 813L499 814L497 814L497 813L495 813L495 814L494 814L494 813L485 813L485 814L484 814L484 813L474 813L474 814L473 814L473 813L468 813L468 814L467 814L467 813L462 813L462 814L461 814L461 813L451 813L451 814L450 814L450 813L445 813L445 814L444 814L444 813L426 813L426 814L425 814L425 813L421 813L421 814L420 814L420 813L417 813L417 814L416 814L416 813L410 813L410 814L409 814L409 813L402 813L402 814L401 814L401 813L399 813L399 814L398 814L398 813L394 813L394 814L393 814L393 813L361 813L361 814L360 814L360 813L345 813L345 814L344 814L344 813L343 813L343 814L342 814L342 813L335 813L335 814L334 814L334 813L309 813L309 814L308 814L308 813L295 813L295 814L294 814L294 813L290 813L290 814L289 814L289 813L286 813L286 814L285 814L285 813L276 813L276 814L275 814L275 813L272 813L272 814L271 814L271 813L270 813L270 814L268 814L268 813L257 813L257 814L256 814L256 813L245 813L245 814L244 814L244 813L230 813L230 814L229 814L229 813L228 813L228 814L227 814L227 813L222 813L222 814L221 814L221 813L216 813L216 814L215 814L215 813L214 813L214 814L213 814L213 813L209 813L209 814L208 814L208 813L201 813L201 814L200 814L200 813L188 813L188 814L187 814L187 813L184 813L184 814L181 814L181 813L178 813L178 814L176 814L176 813L170 813L170 814L169 814L169 813L147 813L147 814L146 814L146 813L145 813L145 814L144 814L144 813L143 813L143 814L142 814L142 813L123 813L123 814L122 814L122 813L114 813L114 814L113 814L113 813L99 813L99 814L98 814L98 813L90 813Z" fill="#f40000"/>
<rect x="737" y="720" width="1" height="94" fill="#f40000"/><rect x="738" y="720" width="1" height="36" fill="#f40000"/>
<path d="M738 721L739 721L739 724L741 724L741 719L742 719L742 721L744 721L744 725L745 725L745 726L746 726L746 729L747 729L747 733L748 733L748 735L749 735L749 745L750 745L750 743L751 743L751 748L752 748L752 747L753 747L753 740L754 740L754 747L755 747L755 744L757 744L757 743L758 743L758 753L759 753L759 750L760 750L760 752L761 752L761 755L763 755L763 762L764 762L764 753L765 753L765 756L766 756L766 755L767 755L767 754L768 754L768 764L769 764L769 759L770 759L770 761L772 761L772 760L773 760L773 766L774 766L774 765L775 765L775 768L776 768L776 762L777 762L777 761L778 761L778 769L779 769L779 765L782 765L782 774L783 774L783 769L784 769L784 770L785 770L785 771L786 771L786 769L787 769L787 772L788 772L788 767L789 767L789 769L790 769L790 770L791 770L791 768L792 768L792 772L794 772L794 773L795 773L795 776L796 776L796 773L797 773L797 781L798 781L798 778L799 778L799 774L800 774L800 772L802 772L802 778L803 778L803 776L805 776L805 774L806 774L806 785L807 785L807 778L808 778L808 779L810 779L810 774L811 774L811 778L813 778L813 780L814 780L814 781L815 781L815 777L816 777L816 782L817 782L817 780L818 780L818 781L819 781L819 782L820 782L820 779L821 779L821 782L822 782L822 781L823 781L823 782L824 782L824 780L825 780L825 779L826 779L826 782L829 782L829 779L830 779L830 788L831 788L831 783L832 783L832 784L833 784L833 781L834 781L834 779L835 779L835 783L836 783L836 781L837 781L837 784L839 784L839 781L840 781L840 788L841 788L841 784L843 784L843 783L844 783L844 782L845 782L845 791L846 791L846 785L848 785L848 784L849 784L849 781L850 781L850 785L851 785L851 784L853 784L853 782L854 782L854 789L855 789L855 784L857 784L857 786L858 786L858 782L859 782L859 786L862 786L862 785L863 785L863 783L864 783L864 789L865 789L865 785L868 785L868 782L869 782L869 785L870 785L870 786L871 786L871 784L873 784L873 783L874 783L874 786L875 786L875 785L877 785L877 782L878 782L878 786L879 786L879 785L880 785L880 784L881 784L881 785L882 785L882 783L883 783L883 791L884 791L884 787L885 787L885 786L886 786L886 787L887 787L887 783L888 783L888 790L889 790L889 787L890 787L890 786L892 786L892 784L893 784L893 787L897 787L897 785L898 785L898 794L899 794L899 786L900 786L900 788L901 788L901 785L902 785L902 787L903 787L903 786L904 786L904 787L905 787L905 788L906 788L906 784L907 784L907 792L908 792L908 788L909 788L909 787L910 787L910 788L911 788L911 784L912 784L912 789L915 789L915 788L916 788L916 784L917 784L917 793L918 793L918 788L919 788L919 787L921 787L921 785L922 785L922 792L923 792L923 787L924 787L924 788L925 788L925 785L926 785L926 791L927 791L927 789L928 789L928 787L929 787L929 788L930 788L930 786L931 786L931 789L933 789L933 787L934 787L934 788L935 788L935 785L936 785L936 788L937 788L937 789L938 789L938 787L939 787L939 789L940 789L940 785L941 785L941 792L942 792L942 788L944 788L944 787L945 787L945 785L946 785L946 793L947 793L947 786L948 786L948 788L949 788L949 786L950 786L950 794L951 794L951 787L954 787L954 786L955 786L955 792L956 792L956 788L957 788L957 787L958 787L958 788L959 788L959 785L960 785L960 795L961 795L961 787L962 787L962 788L963 788L963 790L964 790L964 786L965 786L965 795L966 795L966 789L967 789L967 787L968 787L968 789L969 789L969 786L970 786L970 792L971 792L971 790L972 790L972 788L973 788L973 785L974 785L974 795L975 795L975 788L976 788L976 789L977 789L977 787L978 787L978 785L979 785L979 795L980 795L980 788L981 788L981 787L982 787L982 790L983 790L983 786L984 786L984 793L985 793L985 788L986 788L986 789L987 789L987 790L988 790L988 785L989 785L989 790L990 790L990 789L993 789L993 786L994 786L994 795L995 795L995 788L996 788L996 789L997 789L997 786L998 786L998 794L999 794L999 788L1000 788L1000 790L1002 790L1002 785L1003 785L1003 790L1004 790L1004 789L1005 789L1005 790L1007 790L1007 786L1008 786L1008 795L1009 795L1009 790L1011 790L1011 789L1012 789L1012 785L1013 785L1013 793L1014 793L1014 788L1015 788L1015 789L1017 789L1017 785L1018 785L1018 793L1019 793L1019 789L1020 789L1020 788L1021 788L1021 786L1022 786L1022 788L1023 788L1023 789L1024 789L1024 787L1026 787L1026 785L1027 785L1027 790L1028 790L1028 789L1030 789L1030 788L1031 788L1031 787L1032 787L1032 794L1033 794L1033 788L1035 788L1035 789L1036 789L1036 785L1037 785L1037 795L1038 795L1038 789L1041 789L1041 785L1042 785L1042 792L1043 792L1043 788L1045 788L1045 785L1046 785L1046 794L1047 794L1047 789L1049 789L1049 788L1050 788L1050 785L1051 785L1051 792L1052 792L1052 789L1053 789L1053 787L1054 787L1054 789L1055 789L1055 786L1056 786L1056 793L1057 793L1057 789L1058 789L1058 788L1060 788L1060 785L1061 785L1061 795L1062 795L1062 790L1065 790L1065 786L1066 786L1066 793L1067 793L1067 787L1068 787L1068 789L1069 789L1069 785L1070 785L1070 795L1071 795L1071 789L1073 789L1073 787L1074 787L1074 786L1075 786L1075 795L1076 795L1076 788L1079 788L1079 786L1080 786L1080 789L1081 789L1081 788L1083 788L1083 790L1084 790L1084 785L1085 785L1085 795L1086 795L1086 788L1087 788L1087 790L1088 790L1088 788L1089 788L1089 786L1090 786L1090 793L1091 793L1091 788L1092 788L1092 789L1093 789L1093 786L1094 786L1094 788L1095 788L1095 790L1096 790L1096 788L1097 788L1097 787L1098 787L1098 785L1099 785L1099 795L1100 795L1100 789L1103 789L1103 785L1104 785L1104 793L1105 793L1105 787L1106 787L1106 789L1107 789L1107 788L1108 788L1108 785L1109 785L1109 790L1110 790L1110 788L1111 788L1111 789L1112 789L1112 790L1113 790L1113 785L1114 785L1114 795L1115 795L1115 790L1116 790L1116 787L1117 787L1117 785L1118 785L1118 793L1119 793L1119 789L1122 789L1122 787L1123 787L1123 788L1124 788L1124 789L1125 789L1125 790L1126 790L1126 788L1127 788L1127 785L1128 785L1128 788L1131 788L1131 789L1132 789L1132 786L1133 786L1133 790L1134 790L1134 788L1136 788L1136 787L1137 787L1137 785L1138 785L1138 788L1139 788L1139 789L1140 789L1140 788L1141 788L1141 786L1142 786L1142 793L1143 793L1143 788L1145 788L1145 789L1146 789L1146 786L1147 786L1147 788L1148 788L1148 787L1149 787L1149 788L1150 788L1150 790L1151 790L1151 785L1152 785L1152 792L1153 792L1153 788L1154 788L1154 787L1155 787L1155 790L1156 790L1156 786L1157 786L1157 795L1158 795L1158 787L1159 787L1159 789L1160 789L1160 788L1161 788L1161 786L1162 786L1162 792L1163 792L1163 790L1164 790L1164 789L1165 789L1165 786L1166 786L1166 789L1167 789L1167 788L1168 788L1168 790L1169 790L1169 788L1170 788L1170 786L1171 786L1171 792L1172 792L1172 789L1173 789L1173 788L1174 788L1174 787L1176 787L1176 789L1179 789L1179 788L1180 788L1180 786L1181 786L1181 793L1182 793L1182 787L1183 787L1183 789L1184 789L1184 788L1185 788L1185 786L1186 786L1186 793L1187 793L1187 788L1188 788L1188 789L1189 789L1189 786L1190 786L1190 792L1191 792L1191 788L1192 788L1192 789L1193 789L1193 790L1194 790L1194 786L1195 786L1195 793L1196 793L1196 788L1197 788L1197 789L1198 789L1198 790L1199 790L1199 786L1200 786L1200 795L1201 795L1201 787L1202 787L1202 789L1204 789L1204 786L1205 786L1205 788L1208 788L1208 790L1209 790L1209 787L1210 787L1210 792L1211 792L1211 788L1213 788L1213 786L1214 786L1214 788L1215 788L1215 790L1216 790L1216 789L1217 789L1217 788L1218 788L1218 787L1219 787L1219 795L1220 795L1220 787L1221 787L1221 789L1222 789L1222 790L1223 790L1223 786L1224 786L1224 789L1225 789L1225 790L1227 790L1227 789L1228 789L1228 785L1229 785L1229 790L1230 790L1230 788L1231 788L1231 790L1233 790L1233 786L1234 786L1234 790L1235 790L1235 788L1236 788L1236 789L1237 789L1237 787L1238 787L1238 793L1239 793L1239 787L1240 787L1240 788L1242 788L1242 786L1243 786L1243 794L1244 794L1244 790L1245 790L1245 788L1247 788L1247 786L1248 786L1248 790L1249 790L1249 789L1250 789L1250 788L1251 788L1251 789L1252 789L1252 787L1253 787L1253 794L1254 794L1254 789L1256 789L1256 788L1257 788L1257 786L1258 786L1258 790L1259 790L1259 788L1260 788L1260 789L1261 789L1261 787L1262 787L1262 790L1263 790L1263 787L1264 787L1264 788L1266 788L1266 785L1267 785L1267 789L1268 789L1268 787L1269 787L1269 789L1270 789L1270 788L1271 788L1271 787L1272 787L1272 789L1273 789L1273 788L1274 788L1274 789L1275 789L1275 788L1276 788L1276 786L1277 786L1277 793L1278 793L1278 788L1280 788L1280 790L1281 790L1281 786L1282 786L1282 789L1283 789L1283 787L1284 787L1284 789L1285 789L1285 787L1286 787L1286 794L1287 794L1287 788L1288 788L1288 790L1289 790L1289 789L1290 789L1290 785L1291 785L1291 795L1292 795L1292 788L1294 788L1294 789L1295 789L1295 787L1296 787L1296 789L1297 789L1297 788L1299 788L1299 789L1300 789L1300 786L1301 786L1301 795L1302 795L1302 788L1303 788L1303 789L1305 789L1305 786L1306 786L1306 792L1307 792L1307 790L1309 790L1309 786L1310 786L1310 793L1311 793L1311 789L1312 789L1312 787L1313 787L1313 789L1314 789L1314 787L1315 787L1315 793L1316 793L1316 788L1317 788L1317 790L1318 790L1318 789L1319 789L1319 785L1320 785L1320 790L1321 790L1321 788L1324 788L1324 786L1325 786L1325 789L1326 789L1326 788L1327 788L1327 790L1328 790L1328 788L1329 788L1329 786L1330 786L1330 792L1331 792L1331 790L1332 790L1332 789L1333 789L1333 786L1334 786L1334 790L1335 790L1335 789L1336 789L1336 788L1337 788L1337 787L1338 787L1338 786L1339 786L1339 795L1340 795L1340 790L1342 790L1342 788L1343 788L1343 785L1344 785L1344 792L1345 792L1345 789L1346 789L1346 788L1348 788L1348 785L1349 785L1349 794L1350 794L1350 788L1351 788L1351 789L1353 789L1353 785L1354 785L1354 795L1355 795L1355 790L1356 790L1356 788L1357 788L1357 786L1358 786L1358 795L1359 795L1359 788L1360 788L1360 789L1362 789L1362 785L1363 785L1363 789L1364 789L1364 788L1365 788L1365 789L1366 789L1366 788L1367 788L1367 785L1368 785L1368 790L1369 790L1369 789L1371 789L1371 788L1372 788L1372 786L1373 786L1373 793L1374 793L1374 790L1375 790L1375 788L1376 788L1376 790L1377 790L1377 786L1378 786L1378 790L1379 790L1379 788L1381 788L1381 787L1382 787L1382 793L1383 793L1383 788L1384 788L1384 789L1385 789L1385 788L1386 788L1386 786L1387 786L1387 795L1388 795L1388 788L1389 788L1389 790L1390 790L1390 788L1391 788L1391 787L1392 787L1392 790L1393 790L1393 789L1394 789L1394 788L1395 788L1395 789L1396 789L1396 787L1397 787L1397 790L1398 790L1398 788L1399 788L1399 789L1401 789L1401 786L1402 786L1402 795L1403 795L1403 788L1404 788L1404 789L1405 789L1405 787L1406 787L1406 795L1407 795L1407 789L1409 789L1409 788L1410 788L1410 786L1411 786L1411 793L1412 793L1412 787L1413 787L1413 788L1415 788L1415 786L1416 786L1416 793L1417 793L1417 787L1418 787L1418 789L1419 789L1419 788L1420 788L1420 786L1421 786L1421 793L1422 793L1422 789L1423 789L1423 790L1424 790L1424 788L1425 788L1425 787L1426 787L1426 793L1427 793L1427 788L1428 788L1428 790L1429 790L1429 786L1430 786L1430 795L1431 795L1431 788L1432 788L1432 790L1434 790L1434 787L1435 787L1435 794L1436 794L1436 789L1437 789L1437 790L1438 790L1438 788L1439 788L1439 785L1440 785L1440 793L1441 793L1441 789L1442 789L1442 790L1443 790L1443 789L1444 789L1444 785L1445 785L1445 793L1446 793L1446 788L1447 788L1447 790L1448 790L1448 789L1449 789L1449 787L1450 787L1450 795L1451 795L1451 790L1452 790L1452 787L1454 787L1454 790L1456 790L1456 789L1457 789L1457 788L1458 788L1458 786L1459 786L1459 793L1460 793L1460 788L1461 788L1461 790L1462 790L1462 789L1463 789L1463 787L1464 787L1464 789L1465 789L1465 787L1466 787L1466 788L1468 788L1468 785L1469 785L1469 795L1470 795L1470 790L1471 790L1471 788L1472 788L1472 789L1473 789L1473 786L1474 786L1474 794L1475 794L1475 790L1476 790L1476 789L1477 789L1477 786L1478 786L1478 793L1479 793L1479 788L1482 788L1482 787L1483 787L1483 789L1485 789L1485 790L1486 790L1486 789L1487 789L1487 786L1488 786L1488 789L1489 789L1489 788L1490 788L1490 787L1491 787L1491 788L1492 788L1492 787L1493 787L1493 789L1494 789L1494 787L1495 787L1495 789L1497 789L1497 786L1498 786L1498 792L1499 792L1499 788L1500 788L1500 790L1501 790L1501 786L1502 786L1502 793L1503 793L1503 789L1504 789L1504 788L1505 788L1505 790L1506 790L1506 787L1507 787L1507 795L1508 795L1508 790L1509 790L1509 789L1511 789L1511 787L1512 787L1512 790L1513 790L1513 788L1514 788L1514 787L1516 787L1516 786L1517 786L1517 789L1519 789L1519 788L1520 788L1520 789L1521 789L1521 786L1522 786L1522 790L1523 790L1523 788L1524 788L1524 790L1525 790L1525 787L1526 787L1526 794L1527 794L1527 789L1528 789L1528 790L1530 790L1530 786L1531 786L1531 789L1532 789L1532 790L1533 790L1533 788L1534 788L1534 790L1535 790L1535 786L1536 786L1536 789L1538 789L1538 790L1539 790L1539 787L1540 787L1540 786L1541 786L1541 794L1542 794L1542 789L1544 789L1544 788L1545 788L1545 786L1546 786L1546 793L1547 793L1547 789L1548 789L1548 788L1549 788L1549 787L1550 787L1550 793L1551 793L1551 789L1552 789L1552 790L1553 790L1553 788L1554 788L1554 787L1555 787L1555 789L1557 789L1557 788L1558 788L1558 789L1559 789L1559 786L1560 786L1560 789L1561 789L1561 790L1562 790L1562 788L1563 788L1563 790L1564 790L1564 786L1565 786L1565 789L1566 789L1566 788L1569 788L1569 786L1570 786L1570 796L1571 796L1571 789L1572 789L1572 788L1573 788L1573 787L1574 787L1574 789L1575 789L1575 790L1576 790L1576 788L1577 788L1577 790L1578 790L1578 786L1579 786L1579 789L1580 789L1580 790L1581 790L1581 789L1582 789L1582 790L1583 790L1583 787L1584 787L1584 796L1585 796L1585 790L1588 790L1588 786L1589 786L1589 790L1591 790L1591 789L1592 789L1592 787L1594 787L1594 792L1595 792L1595 789L1597 789L1597 787L1598 787L1598 794L1599 794L1599 790L1601 790L1601 789L1602 789L1602 786L1603 786L1603 789L1606 789L1606 787L1607 787L1607 786L1608 786L1608 789L1609 789L1609 787L1610 787L1610 789L1611 789L1611 787L1612 787L1612 785L1613 785L1613 787L1616 787L1616 786L1617 786L1617 784L1618 784L1618 787L1619 787L1619 788L1620 788L1620 786L1621 786L1621 784L1622 784L1622 792L1623 792L1623 786L1624 786L1624 785L1625 785L1625 787L1626 787L1626 784L1627 784L1627 785L1628 785L1628 786L1631 786L1631 783L1632 783L1632 785L1633 785L1633 784L1634 784L1634 785L1635 785L1635 783L1636 783L1636 781L1637 781L1637 791L1638 791L1638 785L1640 785L1640 784L1641 784L1641 782L1642 782L1642 790L1643 790L1643 783L1645 783L1645 782L1646 782L1646 788L1647 788L1647 783L1648 783L1648 782L1649 782L1649 784L1650 784L1650 780L1651 780L1651 786L1652 786L1652 783L1653 783L1653 781L1654 781L1654 782L1655 782L1655 777L1656 777L1656 785L1657 785L1657 779L1659 779L1659 778L1660 778L1660 776L1661 776L1661 782L1662 782L1662 775L1663 775L1663 776L1664 776L1664 777L1665 777L1665 773L1666 773L1666 781L1667 781L1667 776L1668 776L1668 774L1669 774L1669 771L1670 771L1670 776L1671 776L1671 771L1673 771L1673 770L1674 770L1674 769L1675 769L1675 770L1677 770L1677 768L1678 768L1678 769L1679 769L1679 765L1680 765L1680 769L1681 769L1681 766L1682 766L1682 764L1683 764L1683 763L1684 763L1684 760L1685 760L1685 762L1686 762L1686 760L1687 760L1687 759L1688 759L1688 758L1689 758L1689 755L1690 755L1690 757L1691 757L1691 758L1692 758L1692 756L1693 756L1693 753L1694 753L1694 760L1695 760L1695 754L1696 754L1696 753L1697 753L1697 751L1698 751L1698 749L1699 749L1699 751L1700 751L1700 750L1701 750L1701 747L1703 747L1703 743L1704 743L1704 748L1705 748L1705 742L1706 742L1706 741L1707 741L1707 739L1708 739L1708 736L1709 736L1709 740L1710 740L1710 736L1711 736L1711 734L1713 734L1713 731L1714 731L1714 738L1715 738L1715 732L1716 732L1716 731L1717 731L1717 729L1718 729L1718 735L1719 735L1719 729L1721 729L1721 728L1722 728L1722 724L1723 724L1723 727L1724 727L1724 724L1726 724L1726 723L1727 723L1727 720L1728 720L1728 725L1729 725L1729 720L1730 720L1730 719L1731 719L1731 718L1732 718L1732 715L1733 715L1733 718L1734 718L1734 716L1737 716L1737 715L1738 715L1738 716L1739 716L1739 717L1740 717L1740 716L1741 716L1741 715L1742 715L1742 726L1741 726L1741 725L1740 725L1740 726L1739 726L1739 728L1738 728L1738 727L1737 727L1737 728L1735 728L1735 726L1734 726L1734 731L1732 731L1732 732L1731 732L1731 733L1730 733L1730 728L1729 728L1729 737L1725 737L1725 734L1724 734L1724 743L1721 743L1721 740L1720 740L1720 747L1719 747L1719 744L1718 744L1718 745L1717 745L1717 746L1716 746L1716 747L1715 747L1715 749L1714 749L1714 748L1711 748L1711 744L1710 744L1710 752L1709 752L1709 751L1707 751L1707 753L1706 753L1706 754L1705 754L1705 759L1704 759L1704 757L1703 757L1703 760L1702 760L1702 762L1701 762L1701 758L1700 758L1700 766L1699 766L1699 765L1698 765L1698 766L1697 766L1697 762L1696 762L1696 771L1694 771L1694 770L1693 770L1693 771L1692 771L1692 767L1691 767L1691 774L1689 774L1689 776L1688 776L1688 774L1687 774L1687 775L1686 775L1686 779L1685 779L1685 777L1684 777L1684 780L1682 780L1682 775L1681 775L1681 785L1680 785L1680 782L1679 782L1679 783L1678 783L1678 786L1676 786L1676 789L1675 789L1675 788L1674 788L1674 787L1673 787L1673 788L1672 788L1672 792L1671 792L1671 789L1669 789L1669 791L1668 791L1668 788L1667 788L1667 794L1666 794L1666 791L1665 791L1665 793L1664 793L1664 794L1663 794L1663 793L1662 793L1662 797L1661 797L1661 795L1660 795L1660 796L1659 796L1659 797L1658 797L1658 791L1657 791L1657 798L1656 798L1656 799L1655 799L1655 798L1653 798L1653 795L1652 795L1652 803L1651 803L1651 801L1650 801L1650 800L1648 800L1648 803L1647 803L1647 801L1645 801L1645 800L1644 800L1644 801L1643 801L1643 803L1642 803L1642 801L1641 801L1641 800L1640 800L1640 801L1639 801L1639 795L1638 795L1638 804L1637 804L1637 801L1635 801L1635 802L1634 802L1634 797L1633 797L1633 805L1632 805L1632 803L1631 803L1631 802L1629 802L1629 800L1628 800L1628 806L1627 806L1627 802L1626 802L1626 804L1625 804L1625 799L1624 799L1624 805L1623 805L1623 803L1621 803L1621 805L1620 805L1620 798L1619 798L1619 807L1618 807L1618 804L1617 804L1617 803L1616 803L1616 806L1615 806L1615 800L1614 800L1614 806L1613 806L1613 804L1612 804L1612 805L1611 805L1611 803L1610 803L1610 801L1609 801L1609 807L1608 807L1608 805L1605 805L1605 800L1604 800L1604 808L1603 808L1603 806L1602 806L1602 805L1601 805L1601 803L1600 803L1600 808L1599 808L1599 807L1597 807L1597 806L1596 806L1596 802L1595 802L1595 809L1594 809L1594 806L1592 806L1592 807L1591 807L1591 802L1590 802L1590 809L1589 809L1589 806L1588 806L1588 805L1587 805L1587 806L1586 806L1586 805L1585 805L1585 809L1584 809L1584 806L1583 806L1583 807L1582 807L1582 806L1581 806L1581 802L1580 802L1580 808L1579 808L1579 807L1577 807L1577 800L1576 800L1576 809L1575 809L1575 805L1574 805L1574 806L1573 806L1573 807L1572 807L1572 802L1571 802L1571 809L1570 809L1570 806L1569 806L1569 807L1568 807L1568 805L1567 805L1567 806L1566 806L1566 808L1565 808L1565 807L1563 807L1563 806L1562 806L1562 801L1561 801L1561 809L1560 809L1560 807L1557 807L1557 801L1556 801L1556 809L1555 809L1555 806L1553 806L1553 801L1552 801L1552 808L1551 808L1551 805L1550 805L1550 806L1549 806L1549 807L1548 807L1548 800L1547 800L1547 809L1546 809L1546 807L1544 807L1544 806L1543 806L1543 802L1542 802L1542 809L1541 809L1541 805L1540 805L1540 807L1539 807L1539 806L1538 806L1538 800L1537 800L1537 808L1536 808L1536 807L1535 807L1535 806L1533 806L1533 800L1532 800L1532 809L1531 809L1531 807L1529 807L1529 802L1528 802L1528 809L1527 809L1527 807L1526 807L1526 806L1524 806L1524 805L1523 805L1523 808L1521 808L1521 807L1520 807L1520 805L1519 805L1519 807L1518 807L1518 808L1517 808L1517 807L1516 807L1516 806L1515 806L1515 807L1514 807L1514 801L1513 801L1513 808L1512 808L1512 806L1511 806L1511 807L1510 807L1510 805L1509 805L1509 806L1508 806L1508 808L1507 808L1507 807L1506 807L1506 808L1505 808L1505 802L1504 802L1504 808L1503 808L1503 807L1502 807L1502 805L1500 805L1500 800L1499 800L1499 808L1498 808L1498 807L1497 807L1497 806L1496 806L1496 807L1495 807L1495 801L1494 801L1494 808L1493 808L1493 805L1492 805L1492 806L1491 806L1491 807L1490 807L1490 800L1489 800L1489 809L1488 809L1488 807L1486 807L1486 805L1485 805L1485 806L1484 806L1484 808L1483 808L1483 805L1482 805L1482 807L1481 807L1481 805L1480 805L1480 809L1479 809L1479 805L1478 805L1478 808L1477 808L1477 806L1475 806L1475 808L1474 808L1474 807L1473 807L1473 806L1472 806L1472 805L1471 805L1471 807L1470 807L1470 809L1469 809L1469 806L1467 806L1467 805L1466 805L1466 806L1465 806L1465 809L1464 809L1464 805L1463 805L1463 807L1462 807L1462 805L1461 805L1461 806L1460 806L1460 809L1459 809L1459 807L1457 807L1457 803L1456 803L1456 808L1455 808L1455 807L1454 807L1454 806L1453 806L1453 805L1452 805L1452 803L1451 803L1451 808L1450 808L1450 805L1449 805L1449 807L1447 807L1447 802L1446 802L1446 809L1445 809L1445 805L1444 805L1444 807L1442 807L1442 800L1441 800L1441 809L1440 809L1440 807L1438 807L1438 805L1437 805L1437 806L1436 806L1436 809L1435 809L1435 806L1434 806L1434 808L1433 808L1433 806L1432 806L1432 809L1431 809L1431 807L1430 807L1430 806L1428 806L1428 803L1427 803L1427 809L1426 809L1426 805L1425 805L1425 806L1424 806L1424 805L1423 805L1423 806L1422 806L1422 808L1421 808L1421 807L1420 807L1420 808L1419 808L1419 805L1418 805L1418 806L1417 806L1417 809L1416 809L1416 807L1415 807L1415 805L1414 805L1414 807L1413 807L1413 801L1412 801L1412 810L1411 810L1411 805L1409 805L1409 800L1408 800L1408 809L1407 809L1407 807L1406 807L1406 808L1404 808L1404 801L1403 801L1403 808L1402 808L1402 807L1401 807L1401 808L1400 808L1400 806L1398 806L1398 808L1397 808L1397 805L1396 805L1396 806L1395 806L1395 805L1394 805L1394 801L1393 801L1393 808L1392 808L1392 806L1391 806L1391 807L1389 807L1389 800L1388 800L1388 808L1386 808L1386 807L1385 807L1385 799L1384 799L1384 808L1383 808L1383 805L1382 805L1382 806L1381 806L1381 807L1380 807L1380 800L1379 800L1379 809L1378 809L1378 808L1377 808L1377 806L1376 806L1376 807L1374 807L1374 808L1373 808L1373 806L1372 806L1372 808L1371 808L1371 805L1370 805L1370 803L1369 803L1369 809L1368 809L1368 807L1366 807L1366 805L1364 805L1364 809L1363 809L1363 806L1362 806L1362 808L1361 808L1361 801L1360 801L1360 808L1359 808L1359 806L1357 806L1357 805L1356 805L1356 802L1355 802L1355 809L1354 809L1354 807L1351 807L1351 800L1350 800L1350 809L1349 809L1349 807L1348 807L1348 805L1347 805L1347 806L1345 806L1345 808L1344 808L1344 807L1343 807L1343 806L1340 806L1340 810L1339 810L1339 806L1337 806L1337 800L1336 800L1336 808L1335 808L1335 805L1334 805L1334 806L1332 806L1332 800L1331 800L1331 809L1330 809L1330 805L1329 805L1329 806L1328 806L1328 805L1327 805L1327 806L1326 806L1326 809L1325 809L1325 808L1323 808L1323 807L1322 807L1322 802L1321 802L1321 810L1320 810L1320 807L1319 807L1319 806L1318 806L1318 807L1317 807L1317 805L1316 805L1316 809L1315 809L1315 805L1313 805L1313 801L1312 801L1312 809L1311 809L1311 806L1310 806L1310 808L1309 808L1309 805L1308 805L1308 806L1307 806L1307 808L1306 808L1306 806L1303 806L1303 802L1302 802L1302 809L1301 809L1301 805L1299 805L1299 807L1297 807L1297 809L1296 809L1296 807L1293 807L1293 805L1292 805L1292 809L1291 809L1291 806L1290 806L1290 805L1289 805L1289 800L1288 800L1288 809L1287 809L1287 808L1286 808L1286 805L1285 805L1285 807L1284 807L1284 802L1283 802L1283 809L1282 809L1282 806L1281 806L1281 807L1280 807L1280 806L1279 806L1279 800L1278 800L1278 809L1277 809L1277 807L1274 807L1274 800L1273 800L1273 809L1272 809L1272 806L1270 806L1270 808L1269 808L1269 805L1268 805L1268 808L1267 808L1267 805L1266 805L1266 806L1265 806L1265 800L1264 800L1264 808L1261 808L1261 806L1260 806L1260 800L1259 800L1259 809L1258 809L1258 807L1257 807L1257 805L1254 805L1254 808L1253 808L1253 805L1251 805L1251 807L1250 807L1250 806L1249 806L1249 808L1248 808L1248 805L1247 805L1247 808L1246 808L1246 807L1245 807L1245 802L1244 802L1244 810L1243 810L1243 808L1242 808L1242 807L1241 807L1241 806L1240 806L1240 809L1239 809L1239 806L1237 806L1237 807L1236 807L1236 805L1235 805L1235 809L1234 809L1234 806L1233 806L1233 807L1231 807L1231 801L1230 801L1230 809L1229 809L1229 806L1228 806L1228 805L1227 805L1227 807L1226 807L1226 806L1225 806L1225 809L1224 809L1224 808L1222 808L1222 806L1221 806L1221 800L1220 800L1220 808L1219 808L1219 807L1218 807L1218 806L1217 806L1217 800L1216 800L1216 808L1215 808L1215 806L1214 806L1214 805L1213 805L1213 806L1211 806L1211 810L1210 810L1210 808L1209 808L1209 807L1207 807L1207 803L1206 803L1206 809L1205 809L1205 806L1204 806L1204 808L1203 808L1203 805L1202 805L1202 807L1201 807L1201 810L1200 810L1200 807L1199 807L1199 806L1198 806L1198 805L1197 805L1197 803L1196 803L1196 810L1195 810L1195 808L1194 808L1194 806L1193 806L1193 803L1192 803L1192 808L1191 808L1191 805L1190 805L1190 806L1189 806L1189 807L1188 807L1188 806L1187 806L1187 810L1186 810L1186 805L1185 805L1185 808L1184 808L1184 806L1183 806L1183 802L1182 802L1182 808L1181 808L1181 807L1178 807L1178 806L1177 806L1177 809L1176 809L1176 807L1173 807L1173 801L1172 801L1172 809L1171 809L1171 807L1170 807L1170 808L1169 808L1169 801L1168 801L1168 809L1167 809L1167 806L1166 806L1166 807L1165 807L1165 806L1164 806L1164 802L1163 802L1163 809L1162 809L1162 807L1161 807L1161 806L1159 806L1159 803L1158 803L1158 809L1157 809L1157 808L1156 808L1156 806L1155 806L1155 805L1154 805L1154 800L1153 800L1153 809L1152 809L1152 807L1150 807L1150 808L1149 808L1149 806L1148 806L1148 809L1147 809L1147 806L1145 806L1145 799L1144 799L1144 810L1143 810L1143 808L1141 808L1141 807L1140 807L1140 802L1139 802L1139 810L1138 810L1138 805L1137 805L1137 807L1136 807L1136 806L1134 806L1134 809L1133 809L1133 807L1131 807L1131 808L1130 808L1130 802L1129 802L1129 810L1128 810L1128 807L1126 807L1126 806L1125 806L1125 800L1124 800L1124 810L1123 810L1123 807L1122 807L1122 805L1120 805L1120 809L1119 809L1119 805L1118 805L1118 807L1117 807L1117 806L1116 806L1116 807L1115 807L1115 810L1114 810L1114 806L1113 806L1113 808L1111 808L1111 800L1110 800L1110 810L1109 810L1109 805L1108 805L1108 806L1106 806L1106 801L1105 801L1105 809L1104 809L1104 807L1103 807L1103 808L1102 808L1102 807L1101 807L1101 806L1100 806L1100 808L1099 808L1099 807L1098 807L1098 808L1097 808L1097 806L1096 806L1096 809L1095 809L1095 807L1093 807L1093 808L1092 808L1092 802L1091 802L1091 809L1090 809L1090 807L1089 807L1089 806L1088 806L1088 808L1087 808L1087 805L1086 805L1086 809L1085 809L1085 807L1083 807L1083 805L1082 805L1082 806L1081 806L1081 810L1080 810L1080 807L1078 807L1078 808L1077 808L1077 806L1076 806L1076 809L1075 809L1075 808L1074 808L1074 805L1073 805L1073 801L1072 801L1072 809L1071 809L1071 808L1068 808L1068 800L1067 800L1067 809L1066 809L1066 807L1065 807L1065 808L1064 808L1064 806L1063 806L1063 805L1062 805L1062 810L1061 810L1061 808L1060 808L1060 807L1058 807L1058 803L1057 803L1057 809L1056 809L1056 808L1055 808L1055 806L1052 806L1052 808L1051 808L1051 805L1050 805L1050 806L1049 806L1049 800L1048 800L1048 810L1047 810L1047 806L1045 806L1045 805L1044 805L1044 800L1043 800L1043 810L1042 810L1042 807L1040 807L1040 808L1039 808L1039 802L1038 802L1038 810L1037 810L1037 808L1036 808L1036 806L1034 806L1034 803L1033 803L1033 809L1032 809L1032 808L1031 808L1031 805L1030 805L1030 806L1028 806L1028 808L1027 808L1027 806L1026 806L1026 807L1025 807L1025 806L1024 806L1024 808L1021 808L1021 807L1020 807L1020 806L1019 806L1019 809L1018 809L1018 807L1017 807L1017 805L1016 805L1016 806L1015 806L1015 802L1014 802L1014 810L1013 810L1013 806L1011 806L1011 805L1010 805L1010 802L1009 802L1009 809L1008 809L1008 807L1006 807L1006 806L1005 806L1005 802L1004 802L1004 810L1003 810L1003 806L1002 806L1002 808L1001 808L1001 807L1000 807L1000 809L999 809L999 807L998 807L998 808L996 808L996 803L995 803L995 810L994 810L994 807L991 807L991 801L990 801L990 810L989 810L989 806L988 806L988 807L986 807L986 802L985 802L985 810L984 810L984 808L983 808L983 805L982 805L982 808L981 808L981 802L980 802L980 810L979 810L979 806L978 806L978 807L977 807L977 801L976 801L976 810L975 810L975 808L974 808L974 806L973 806L973 807L972 807L972 803L971 803L971 809L970 809L970 805L969 805L969 806L967 806L967 801L966 801L966 810L965 810L965 807L962 807L962 806L961 806L961 808L960 808L960 806L958 806L958 808L957 808L957 806L956 806L956 810L955 810L955 808L954 808L954 807L953 807L953 803L952 803L952 810L951 810L951 807L950 807L950 808L949 808L949 806L948 806L948 803L947 803L947 809L946 809L946 808L945 808L945 805L944 805L944 806L943 806L943 801L942 801L942 810L941 810L941 806L938 806L938 807L937 807L937 809L936 809L936 806L935 806L935 808L934 808L934 807L932 807L932 809L931 809L931 806L930 806L930 808L929 808L929 800L928 800L928 809L927 809L927 806L926 806L926 808L925 808L925 806L924 806L924 805L923 805L923 809L922 809L922 807L919 807L919 802L918 802L918 808L917 808L917 807L916 807L916 806L915 806L915 805L914 805L914 807L913 807L913 808L912 808L912 807L911 807L911 805L910 805L910 808L909 808L909 802L908 802L908 810L907 810L907 807L906 807L906 808L905 808L905 803L904 803L904 809L903 809L903 807L902 807L902 806L901 806L901 807L900 807L900 800L899 800L899 808L898 808L898 805L895 805L895 800L894 800L894 809L893 809L893 807L891 807L891 806L890 806L890 800L889 800L889 809L888 809L888 806L886 806L886 805L885 805L885 804L884 804L884 809L883 809L883 807L882 807L882 806L881 806L881 799L880 799L880 809L879 809L879 805L877 805L877 806L876 806L876 800L875 800L875 808L874 808L874 806L873 806L873 804L872 804L872 806L871 806L871 798L870 798L870 807L869 807L869 803L868 803L868 804L867 804L867 803L866 803L866 801L865 801L865 807L864 807L864 803L862 803L862 805L861 805L861 797L860 797L860 807L859 807L859 804L857 804L857 799L856 799L856 807L855 807L855 803L854 803L854 805L853 805L853 804L852 804L852 802L851 802L851 806L850 806L850 804L849 804L849 802L848 802L848 803L847 803L847 796L846 796L846 805L845 805L845 803L843 803L843 802L842 802L842 799L841 799L841 804L840 804L840 802L839 802L839 803L838 803L838 801L836 801L836 803L835 803L835 799L833 799L833 801L832 801L832 805L831 805L831 802L830 802L830 800L829 800L829 799L828 799L828 795L827 795L827 802L826 802L826 799L825 799L825 800L824 800L824 799L823 799L823 792L822 792L822 803L821 803L821 800L819 800L819 799L818 799L818 793L817 793L817 801L816 801L816 799L815 799L815 798L813 798L813 792L812 792L812 799L811 799L811 794L810 794L810 797L809 797L809 793L808 793L808 799L807 799L807 798L806 798L806 795L804 795L804 794L803 794L803 797L802 797L802 794L801 794L801 791L799 791L799 788L798 788L798 796L797 796L797 794L796 794L796 792L795 792L795 793L794 793L794 791L793 791L793 792L792 792L792 789L791 789L791 787L789 787L789 785L788 785L788 787L787 787L787 790L786 790L786 789L785 789L785 787L784 787L784 788L783 788L783 784L782 784L782 783L781 783L781 782L780 782L780 775L779 775L779 782L778 782L778 780L777 780L777 778L776 778L776 784L775 784L775 780L774 780L774 783L773 783L773 779L771 779L771 777L770 777L770 774L769 774L769 775L768 775L768 771L767 771L767 770L765 770L765 763L764 763L764 774L763 774L763 771L762 771L762 767L761 767L761 763L760 763L760 765L759 765L759 761L758 761L758 759L757 759L757 757L756 757L756 752L755 752L755 757L754 757L754 754L753 754L753 761L752 761L752 760L751 760L751 751L750 751L750 755L749 755L749 749L748 749L748 746L747 746L747 743L746 743L746 738L744 738L744 734L743 734L743 732L742 732L742 729L741 729L741 731L740 731L740 737L739 737L739 739L738 739Z" fill="#f40000"/>
<path d="M1742 716L1745 716L1745 715L1747 715L1747 714L1748 714L1748 716L1749 716L1749 715L1750 715L1750 714L1751 714L1751 717L1752 717L1752 715L1753 715L1753 714L1754 714L1754 716L1755 716L1755 715L1756 715L1756 714L1757 714L1757 716L1758 716L1758 715L1759 715L1759 714L1760 714L1760 715L1763 715L1763 714L1764 714L1764 716L1765 716L1765 715L1766 715L1766 714L1767 714L1767 716L1768 716L1768 714L1770 714L1770 717L1771 717L1771 715L1772 715L1772 714L1773 714L1773 716L1776 716L1776 720L1779 720L1779 722L1780 722L1780 723L1781 723L1781 722L1782 722L1782 724L1783 724L1783 722L1784 722L1784 721L1785 721L1785 722L1786 722L1786 721L1787 721L1787 720L1788 720L1788 722L1789 722L1789 721L1790 721L1790 720L1794 720L1794 719L1795 719L1795 721L1796 721L1796 719L1797 719L1797 718L1798 718L1798 719L1800 719L1800 718L1801 718L1801 719L1802 719L1802 718L1803 718L1803 717L1804 717L1804 719L1805 719L1805 718L1806 718L1806 717L1807 717L1807 719L1808 719L1808 718L1815 718L1815 717L1816 717L1816 719L1817 719L1817 718L1818 718L1818 717L1819 717L1819 718L1821 718L1821 717L1822 717L1822 718L1825 718L1825 716L1826 716L1826 717L1827 717L1827 716L1828 716L1828 715L1829 715L1829 717L1830 717L1830 716L1831 716L1831 715L1832 715L1832 716L1833 716L1833 715L1835 715L1835 717L1836 717L1836 716L1837 716L1837 715L1838 715L1838 717L1839 717L1839 715L1841 715L1841 717L1842 717L1842 715L1844 715L1844 717L1845 717L1845 715L1847 715L1847 717L1848 717L1848 715L1850 715L1850 717L1851 717L1851 716L1852 716L1852 715L1853 715L1853 717L1854 717L1854 715L1855 715L1855 716L1856 716L1856 715L1857 715L1857 716L1858 716L1858 715L1860 715L1860 716L1861 716L1861 715L1863 715L1863 717L1864 717L1864 716L1865 716L1865 715L1866 715L1866 717L1867 717L1867 715L1869 715L1869 716L1871 716L1871 715L1872 715L1872 717L1873 717L1873 716L1874 716L1874 715L1875 715L1875 717L1876 717L1876 716L1877 716L1877 715L1878 715L1878 716L1879 716L1879 715L1881 715L1881 717L1882 717L1882 715L1886 715L1886 716L1887 716L1887 715L1888 715L1888 717L1889 717L1889 715L1891 715L1891 717L1892 717L1892 715L1894 715L1894 716L1895 716L1895 715L1897 715L1897 716L1898 716L1898 715L1899 715L1899 714L1900 714L1900 715L1902 715L1902 725L1901 725L1901 726L1900 726L1900 725L1899 725L1899 724L1898 724L1898 726L1897 726L1897 725L1895 725L1895 726L1894 726L1894 725L1892 725L1892 726L1891 726L1891 725L1888 725L1888 726L1887 726L1887 725L1885 725L1885 726L1884 726L1884 725L1883 725L1883 724L1882 724L1882 726L1881 726L1881 725L1879 725L1879 726L1878 726L1878 725L1877 725L1877 724L1876 724L1876 726L1875 726L1875 725L1874 725L1874 724L1873 724L1873 726L1872 726L1872 725L1870 725L1870 726L1869 726L1869 725L1868 725L1868 724L1867 724L1867 726L1866 726L1866 725L1865 725L1865 724L1864 724L1864 726L1863 726L1863 725L1862 725L1862 723L1861 723L1861 726L1860 726L1860 725L1858 725L1858 724L1857 724L1857 726L1856 726L1856 725L1855 725L1855 724L1854 724L1854 726L1853 726L1853 725L1852 725L1852 724L1851 724L1851 726L1850 726L1850 725L1849 725L1849 724L1848 724L1848 726L1847 726L1847 725L1846 725L1846 724L1845 724L1845 726L1844 726L1844 725L1842 725L1842 726L1841 726L1841 725L1839 725L1839 726L1838 726L1838 725L1837 725L1837 724L1836 724L1836 726L1834 726L1834 724L1833 724L1833 726L1832 726L1832 725L1831 725L1831 724L1830 724L1830 726L1829 726L1829 725L1826 725L1826 727L1823 727L1823 728L1819 728L1819 727L1817 727L1817 728L1816 728L1816 727L1814 727L1814 728L1812 728L1812 727L1811 727L1811 729L1810 729L1810 728L1809 728L1809 727L1808 727L1808 728L1806 728L1806 727L1805 727L1805 729L1804 729L1804 728L1803 728L1803 726L1802 726L1802 729L1801 729L1801 728L1800 728L1800 727L1799 727L1799 729L1796 729L1796 728L1795 728L1795 730L1793 730L1793 729L1792 729L1792 730L1790 730L1790 729L1789 729L1789 731L1787 731L1787 730L1786 730L1786 731L1784 731L1784 729L1783 729L1783 732L1782 732L1782 731L1781 731L1781 730L1780 730L1780 731L1779 731L1779 729L1778 729L1778 727L1777 727L1777 728L1776 728L1776 726L1775 726L1775 725L1773 725L1773 724L1771 724L1771 725L1770 725L1770 724L1769 724L1769 723L1768 723L1768 725L1766 725L1766 724L1765 724L1765 725L1762 725L1762 723L1761 723L1761 725L1759 725L1759 724L1758 724L1758 725L1757 725L1757 724L1756 724L1756 725L1755 725L1755 726L1754 726L1754 725L1753 725L1753 723L1752 723L1752 725L1749 725L1749 726L1748 726L1748 725L1747 725L1747 724L1746 724L1746 726L1744 726L1744 725L1743 725L1743 727L1742 727Z" fill="#f40000"/>
<path d="M88.5 48 V838" stroke="#5a5a5a" stroke-width="1"/>
<path d="M89 48 V829" stroke="#fff" stroke-width="2" stroke-dasharray="66 6 18 6 18 6 43 6" />
<path d="M1901.5 48 V838" stroke="#fff" stroke-width="1" stroke-dasharray="30 6 10 7 14 6 44 6"/>
<path d="M90 130 L96 136 L90 136 ZM90 154 L96 160 L90 160 ZM90 235 L96 241 L90 241 ZM90 372 L96 378 L90 378 ZM90 487 L96 493 L90 493 ZM90 581 L96 587 L90 587 ZM90 685 L96 691 L90 691 ZM90 810 L96 816 L90 816 Z" fill="#fff" shape-rendering="auto"/>
<path d="M1895 123 L1902 123 L1902 130.5 ZM1899.3 111.5 H1902 V123.5 H1899.3 ZM1895 145.5 L1902 145.5 L1902 153 ZM1899.3 134 H1902 V146 H1899.3 ZM1895 227.5 L1902 227.5 L1902 235 ZM1899.3 216 H1902 V228 H1899.3 ZM1895 307 L1902 307 L1902 314.5 ZM1899.3 295.5 H1902 V307.5 H1899.3 ZM1895 412.5 L1902 412.5 L1902 420 ZM1899.3 401 H1902 V413 H1899.3 ZM1895 510 L1902 510 L1902 517.5 ZM1899.3 498.5 H1902 V510.5 H1899.3 ZM1895 582.5 L1902 582.5 L1902 590 ZM1899.3 571 H1902 V583 H1899.3 ZM1895 712.5 L1902 712.5 L1902 720 ZM1899.3 701 H1902 V713 H1899.3 Z" fill="#fff" shape-rendering="auto"/>
<path d="M1902.5 341.6 L1910 338 L1910 345.2 Z" fill="#e0e0e0" shape-rendering="auto"/>
<path d="M737.5 840 L741.5 848 L733.5 848 Z" fill="#e8e8e8" shape-rendering="auto"/>
<path d="M78 128.5 H88 M78.5 128 V130" stroke="#00e0e0" stroke-width="1.6"/>
<path d="M78 217.5 H88 M78.5 217 V219" stroke="#7f7fff" stroke-width="1.6"/>
<path d="M78 300.5 H88 M78.5 300 V302" stroke="#ff60b0" stroke-width="1.6"/>
<path d="M78 380.5 H88 M78.5 380 V382" stroke="#e8e8e8" stroke-width="1.6"/>
<path d="M78 484.5 H88 M78.5 484 V486" stroke="#e8e800" stroke-width="1.6"/>
<path d="M78 576.5 H88 M78.5 576 V578" stroke="#00c000" stroke-width="1.6"/>
<path d="M78 808.5 H88 M78.5 808 V810" stroke="#ff0000" stroke-width="1.6"/>
<path d="M78 683.5 H88 M78.5 683 V685" stroke="#a6fcfc" stroke-width="1.6"/>
<path d="M710 116 L738 131M710 139 L738 154M710 221 L738 236M702 472 L737 487M702 563 L737 578M682 672 L726 687M656 796 L700 811" stroke="#fff" stroke-width="1" fill="none" shape-rendering="auto"/>
<rect x="93" y="824" width="18" height="10" fill="#f4f4f4"/>
<path d="M95 825 V833 M97 833 L101 825 M103 826 V832" stroke="#333" stroke-width="1.2" fill="none" shape-rendering="auto"/>
<rect x="1879" y="824" width="18" height="10" fill="#f4f4f4"/>
<path d="M1881 825 V833 M1883 833 L1887 825 M1889 826 V832" stroke="#333" stroke-width="1.2" fill="none" shape-rendering="auto"/>
</svg>
<div id="lbl">
<div class="yl" style="top:49.7px">12.86 A</div><div class="yl" style="top:139.7px">10.86 A</div><div class="yl" style="top:238.7px">8.86 A</div><div class="yl" style="top:337.7px">6.86 A</div><div class="yl" style="top:436.7px">4.86 A</div><div class="yl" style="top:535.7px">2.86 A</div><div class="yl" style="top:634.7px">862 mA</div><div class="yl" style="top:733.7px">-1.14 A</div><div class="yl" style="top:821.7px">-3.14 A</div>
<div class="xl" style="left:88px;transform-origin:0 50%">-716 ms</div><div class="xl" style="left:209px;width:120px;text-align:center">-516 ms</div><div class="xl" style="left:391px;width:120px;text-align:center">-316 ms</div><div class="xl" style="left:572px;width:120px;text-align:center">-116 ms</div><div class="xl" style="left:754px;width:120px;text-align:center">84 ms</div><div class="xl" style="left:935px;width:120px;text-align:center">284 ms</div><div class="xl" style="left:1116px;width:120px;text-align:center">484 ms</div><div class="xl" style="left:1298px;width:120px;text-align:center">684 ms</div><div class="xl" style="left:1479px;width:120px;text-align:center">884 ms</div><div class="xl" style="left:1660px;width:120px;text-align:center">1.084 s</div><div class="xl" style="right:18px;transform-origin:100% 50%">1.284 s</div>
<div class="ch" style="left:73px;top:116px;color:#00e0e0">C3</div><div class="ch" style="left:73px;top:205px;color:#7f7fff">C6</div><div class="ch" style="left:73px;top:288px;color:#ff60b0">C2</div><div class="ch" style="left:73px;top:368px;color:#e8e8e8">C5</div><div class="ch" style="left:73px;top:472px;color:#e8e800">C1</div><div class="ch" style="left:73px;top:565px;color:#00c000">C4</div><div class="ch" style="left:73px;top:796px;color:#ff0000">C7</div><div class="ch" style="left:67px;top:669px;width:20px;height:13px;background:#a8fcfc;color:#1c3252;line-height:15px;text-align:right;border-radius:2.5px;padding-right:1px">M7</div>
<div class="tl" style="left:693px;top:100px">AIN1</div><div class="tl" style="left:693px;top:123px">AIN2</div><div class="tl" style="left:693px;top:205px">BIN2</div><div class="tl nu" style="left:681px;top:297px">nSLEEP</div><div class="tl" style="left:678px;top:456px">AOUT2</div><div class="tl" style="left:678px;top:547px">BOUT2</div><div class="tl" style="left:649px;top:656px">I-BOUT12</div><div class="tl" style="left:623px;top:781px">I-AOUT12</div>
</div>
<div id="meas">
<div id="mhead"></div><div id="mval"></div>
<div class="mt" style="left:5px;top:879px;font-weight:bold">Measure</div><div class="mt" style="left:5px;top:899px">value</div><div class="mt" style="left:5px;top:919px">status</div>
<div class="mt r" style="left:134px;top:879px">P1:max(C1)</div><div class="mt r" style="left:280px;top:879px">P2:top(C2)</div><div class="mt r" style="left:426px;top:879px">P3:max(C7)</div><div class="mt r" style="left:572px;top:879px">P4:mean(C7)</div><div class="mt r dim" style="left:718px;top:879px">P5:top(C5)</div><div class="mt r dim" style="left:864px;top:879px">P6:rms(C7)</div><div class="mt r dim" style="left:1010px;top:879px">P7:slew(C1)</div><div class="mt r dim" style="left:1156px;top:879px">P8:slew(C1)</div><div class="mt r dim" style="left:1302px;top:879px">P9:freq@lv(C2)</div><div class="mt r dim" style="left:1448px;top:879px">P10:rise(C5)</div><div class="mt r dim" style="left:1594px;top:879px">P11:fall(C5)</div><div class="mt r dim" style="left:1740px;top:879px">P12:freq(C4)</div>
<div class="mt r" style="left:134px;top:899px">7.04 V</div><div class="mt r" style="left:280px;top:899px">3.38 V</div><div class="mt r" style="left:426px;top:899px">1.95 A</div><div class="mt r" style="left:572px;top:899px">1.125 A</div>
<svg class="abs" style="left:282px;top:922px" width="12" height="10" viewBox="0 0 12 10"><path d="M1.4 5.6 L3.9 8.4 L10.6 1.4" stroke="#10f010" stroke-width="2.4" fill="none"/></svg><svg class="abs" style="left:428px;top:921px" width="12" height="12" viewBox="0 0 12 12" shape-rendering="crispEdges"><path d="M1 1 L11 11 M11 1 L1 11" stroke="#f0f000" stroke-width="1" fill="none" shape-rendering="auto"/><path d="M4.5 7 V2.5 H7.5 V7 M3 7.5 H9" fill="none" stroke="#fff" stroke-width="1"/><rect x="5" y="5" width="2" height="2" fill="#f0f000"/></svg><svg class="abs" style="left:574px;top:922px" width="12" height="10" viewBox="0 0 12 10"><path d="M1.4 5.6 L3.9 8.4 L10.6 1.4" stroke="#10f010" stroke-width="2.4" fill="none"/></svg><svg class="abs" style="left:720px;top:922px" width="12" height="10" viewBox="0 0 12 10"><path d="M1.4 5.6 L3.9 8.4 L10.6 1.4" stroke="#10f010" stroke-width="2.4" fill="none"/></svg>
</div>
<div id="pans">
<div class="pn" style="left:4px"><div class="hd" style="background:#ffff00"></div><div class="nm">C1</div><div class="bg" style="left:41px;width:31px;color:#ffff00">FLT</div><div class="bg" style="left:73px;width:46px;color:#ffff00">DC1M</div><div class="rw" style="top:22px">10.0 V/div</div><div class="rw" style="top:40px">-4.2000 V</div><div class="rw" style="top:63px">6.4914 V</div><div class="rw" style="top:81px">-193.9 mV</div><div class="rw" style="top:99px">-6.6853 V</div><div class="sy ar" style="top:63px">&#8595;</div><div class="sy ar" style="top:81px">&#8593;</div><div class="sy" style="top:99px">&#916;</div></div>
<div class="pn" style="left:129px"><div class="hd" style="background:#ff69b4"></div><div class="nm">C2</div><div class="bg" style="left:41px;width:31px;color:#ff69b4">FLT</div><div class="bg" style="left:73px;width:46px;color:#ff69b4">DC1M</div><div class="rw" style="top:22px">5.00 V/div</div><div class="rw" style="top:40px">7.2000 V ofst</div><div class="rw" style="top:63px">3.3384 V</div><div class="rw" style="top:81px">3.3440 V</div><div class="rw" style="top:99px">5.6 mV</div><div class="sy ar" style="top:63px">&#8595;</div><div class="sy ar" style="top:81px">&#8593;</div><div class="sy" style="top:99px">&#916;</div></div>
<div class="pn" style="left:254px"><div class="hd" style="background:#00ffff"></div><div class="nm">C3</div><div class="bg" style="left:41px;width:31px;color:#00ffff">FLT</div><div class="bg" style="left:73px;width:46px;color:#00ffff">DC1M</div><div class="rw" style="top:22px">5.00 V/div</div><div class="rw" style="top:40px">15.9200 V</div><div class="rw" style="top:63px">-82.3 mV</div><div class="rw" style="top:81px">-85.8 mV</div><div class="rw" style="top:99px">-3.5 mV</div><div class="sy ar" style="top:63px">&#8595;</div><div class="sy ar" style="top:81px">&#8593;</div><div class="sy" style="top:99px">&#916;</div></div>
<div class="pn" style="left:379px"><div class="hd" style="background:#00c800"></div><div class="nm">C4</div><div class="bg" style="left:41px;width:31px;color:#00c800">FLT</div><div class="bg" style="left:73px;width:46px;color:#00c800">DC1M</div><div class="rw" style="top:22px">10.0 V/div</div><div class="rw" style="top:40px">-13.6000 V</div><div class="rw" style="top:63px">6.1635 V</div><div class="rw" style="top:81px">-329.2 mV</div><div class="rw" style="top:99px">-6.4927 V</div><div class="sy ar" style="top:63px">&#8595;</div><div class="sy ar" style="top:81px">&#8593;</div><div class="sy" style="top:99px">&#916;</div></div>
<div class="pn" style="left:504px"><div class="hd" style="background:#e0e0e0"></div><div class="nm">C5</div><div class="bg" style="left:64px;width:14px;color:#e0e0e0">F</div><div class="bg" style="left:79px;width:15px;color:#e0e0e0">B</div><div class="bg" style="left:95px;width:24px;color:#e0e0e0">D1</div><div class="rw" style="top:22px">5.00 V/div</div><div class="rw" style="top:40px">3.1500 V ofst</div><div class="rw" style="top:63px">3.3008 V</div><div class="rw" style="top:81px">513.4 mV</div><div class="rw" style="top:99px">-2.7874 V</div><div class="sy ar" style="top:63px">&#8595;</div><div class="sy ar" style="top:81px">&#8593;</div><div class="sy" style="top:99px">&#916;</div></div>
<div class="pn" style="left:629px"><div class="hd" style="background:#8080ff"></div><div class="nm">C6</div><div class="bg" style="left:64px;width:14px;color:#8080ff">F</div><div class="bg" style="left:79px;width:15px;color:#8080ff">B</div><div class="bg" style="left:95px;width:24px;color:#8080ff">D1</div><div class="rw" style="top:22px">5.00 V/div</div><div class="rw" style="top:40px">11.4000 V</div><div class="rw" style="top:63px">3.2450 V</div><div class="rw" style="top:81px">3.2408 V</div><div class="rw" style="top:99px">-4.2 mV</div><div class="sy ar" style="top:63px">&#8595;</div><div class="sy ar" style="top:81px">&#8593;</div><div class="sy" style="top:99px">&#916;</div></div>
<div class="pn" style="left:754px"><div class="hd" style="background:#ff0000"></div><div class="nm">C7</div><div class="bg" style="left:72px;width:14px;color:#ff0000">F</div><div class="bg" style="left:87px;width:15px;color:#ff0000">B</div><div class="bg" style="left:103px;width:16px;color:#ff0000">D</div><div class="rw" style="top:22px">2.00 A/div</div><div class="rw" style="top:40px">-7.4000 A</div><div class="rw" style="top:63px">1.8047 A</div><div class="rw" style="top:81px">-39.1 mA</div><div class="rw" style="top:99px">-1.8438 A</div><div class="sy ar" style="top:63px">&#8595;</div><div class="sy ar" style="top:81px">&#8593;</div><div class="sy" style="top:99px">&#916;</div></div>
<div class="pn sel" style="left:879px"><div class="hd" style="background:#a8ffff"></div><div class="nm">M7</div><div class="rw" style="top:22px">2.00 A/div</div><div class="rw" style="top:40px">200 ms/div</div><div class="rw" style="top:63px">1.8682 A</div><div class="rw" style="top:81px">-46.1 mA</div><div class="rw" style="top:99px">-1.9143 A</div><div class="sy ar" style="top:63px">&#8595;</div><div class="sy ar" style="top:81px">&#8593;</div><div class="sy" style="top:99px">&#916;</div></div>
<div id="addbox"><svg class="abs" style="left:52px;top:50px" width="16" height="16"><path d="M8 1 V15 M1 8 H15" stroke="#fff" stroke-width="2"/></svg></div>
</div>
<div id="rinfo">
<div class="ib" style="left:1569px;width:72px"><div class="hd" style="background:#00ff00"></div><div class="t" style="left:0;width:72px;text-align:center;top:2px;color:#000">HD</div><div class="t" style="left:0;width:72px;text-align:center;top:31px">12 Bits</div></div>
<div class="ib" style="left:1644px;width:141px"><div class="hd"></div><div class="t" style="left:3px;top:1px;color:#000">Tbase</div><div class="t" style="right:2px;top:1px;color:#000">-284 ms</div><div class="t" style="right:2px;top:22px">200 ms/div</div><div class="t" style="left:3px;top:42px">50 MS</div><div class="t" style="right:2px;top:42px">25 MS/s</div></div>
<div class="ib" style="left:1788px;width:122px"><div class="hd"></div><div class="t" style="left:3px;top:1px;color:#000">Trigger</div><div class="t" style="left:66px;top:1px;width:24px;height:17px;background:#000;border-radius:3px;text-align:center;font-size:14.5px;color:#fff">C5</div><div class="t" style="left:93px;top:1px;width:27px;height:17px;background:#000;border-radius:3px;text-align:center;font-size:14.5px;color:#fff">DC</div><div class="t" style="left:4px;top:22px">Normal</div><div class="t" style="right:2px;top:22px">2.00 V</div><div class="t" style="left:4px;top:42px">Edge</div><div class="t" style="right:2px;top:42px">Positive</div></div>
<div class="cx" style="left:1573px;top:1001px">X1=</div><div class="cx" style="right:197px;top:1001px">1.28399996 s</div><div class="cx" style="right:142px;top:1001px">&#916;X=</div><div class="cx" style="right:9px;top:1001px">-1.99999996 s</div>
<div class="cx" style="left:1573px;top:1021px">X2=</div><div class="cx" style="right:197px;top:1021px">-716.00000 ms</div><div class="cx" style="right:142px;top:1021px">1/&#916;X=</div><div class="cx" style="right:9px;top:1021px">-500.00001 mHz</div>
</div>
<div id="sline"></div>
<div id="logo">TELEDYNE</div><div id="logo2">LECROY</div>
<div id="slow"><i></i><span>Slow Acquisition</span></div>
<div id="date" class="abs">9/9/2022 7:54:24 AM</div>

</div>
</body></html>
